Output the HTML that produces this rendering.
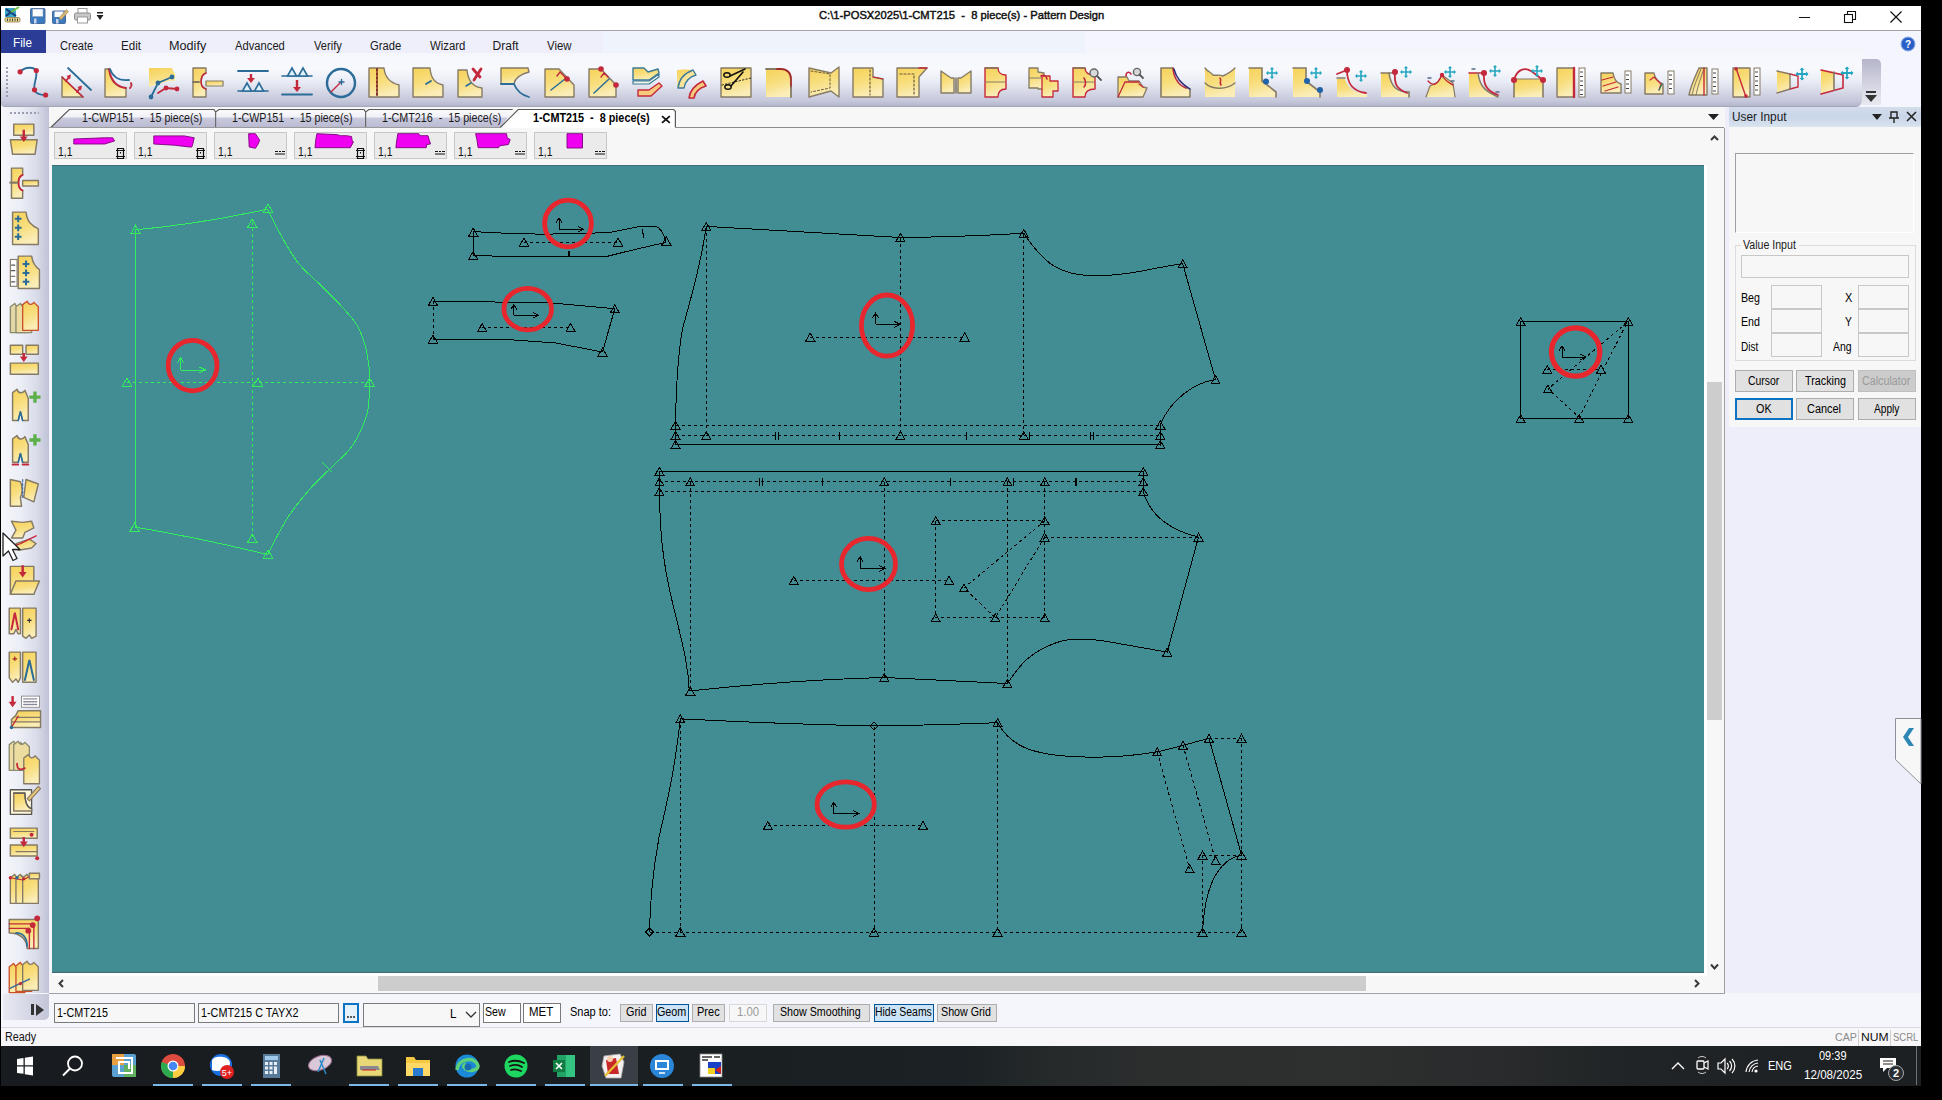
<!DOCTYPE html>
<html><head><meta charset="utf-8">
<style>
*{margin:0;padding:0;box-sizing:border-box}
html,body{width:1942px;height:1100px;overflow:hidden;background:#000;font-family:"Liberation Sans",sans-serif;font-size:12px;color:#000;position:relative}
.a{position:absolute}
.tx{position:absolute;white-space:pre;line-height:1;transform-origin:0 0}
.box{position:absolute;background:#fff;border:1px solid #abadb3}
.btn{position:absolute;background:#e1e1e1;border:1px solid #adadad}
.thumb{position:absolute;background:#ebebeb;border:1px solid #c4c4c4;width:73px;height:28px}
svg{position:absolute;overflow:visible}
</style></head><body>
<!-- window background -->
<div class="a" style="left:1px;top:6px;width:1920px;height:1040px;background:#f5f6fc"></div>
<!-- title bar -->
<div class="a" style="left:1px;top:6px;width:1920px;height:24px;background:#fff"></div>
<div class="a" style="left:1px;top:30px;width:1920px;height:1px;background:#a5a5a8"></div>
<!-- menu bar -->
<div class="a" style="left:1px;top:31px;width:1920px;height:26px;background:#f5f6fd"></div><div class="a" style="left:1px;top:31px;width:602px;height:22px;background:#eeeffa"></div><div class="a" style="left:603px;top:31px;width:482px;height:22px;background:#eff4fc"></div>
<div class="a" style="left:1px;top:30px;width:45px;height:23px;background:#2b3c96"></div>
<!-- toolbar -->
<div class="a" style="left:1px;top:53px;width:1920px;height:54px;background:#f5f6fd"></div>
<div class="a" style="left:1px;top:53px;width:1861px;height:54px;border-radius:0 0 6px 4px;background:linear-gradient(#f6f7fd 0%,#f8f9fd 30%,#eceef7 50%,#d8dae8 70%,#c6c8db 88%,#b7b9cf 97%,#9d9eae 100%)"></div>
<div class="a" style="left:1862px;top:59px;width:19px;height:46px;border-radius:0 5px 0 0;background:linear-gradient(#b5b5cb,#dcdce8 70%,#e8e8f0)"></div>
<!-- tab bar area -->
<div class="a" style="left:49px;top:107px;width:1676px;height:20px;background:#f7f7f7"></div>
<div class="a" style="left:49px;top:127px;width:1676px;height:1px;background:#a0a0a0"></div>
<div class="a" style="left:49px;top:128px;width:1655px;height:37px;background:#f7f7f7"></div>
<!-- canvas -->
<div class="a" style="left:52px;top:165px;width:1652px;height:808px;background:#428c93"></div>
<div class="a" style="left:52px;top:165px;width:1652px;height:1px;background:#3d6f78"></div>
<div class="a" style="left:52px;top:972px;width:1652px;height:1px;background:#3f6a72"></div>
<!-- vertical scrollbar -->
<div class="a" style="left:1704px;top:128px;width:20px;height:865px;background:#f7f7f7"></div>
<div class="a" style="left:1707px;top:382px;width:15px;height:338px;background:#cdcdcd"></div>
<!-- horizontal scrollbar -->
<div class="a" style="left:49px;top:973px;width:1655px;height:20px;background:#f7f7f7"></div>
<div class="a" style="left:52px;top:973px;width:1652px;height:3px;background:#fff"></div>
<div class="a" style="left:1704px;top:165px;width:3px;height:811px;background:#fff"></div>
<div class="a" style="left:378px;top:976px;width:988px;height:15px;background:#cdcdcd"></div>
<div class="a" style="left:49px;top:993px;width:1676px;height:1px;background:#a0a0a8"></div>
<div class="a" style="left:1724px;top:107px;width:1px;height:887px;background:#a0a0a0"></div>
<!-- left vertical toolbar -->
<div class="a" style="left:1px;top:107px;width:48px;height:886px;background:linear-gradient(90deg,#f6f7fb 0%,#eceef6 40%,#d9dbe9 75%,#bfc2d6 100%)"></div>
<div class="a" style="left:3px;top:994px;width:46px;height:26px;border-radius:0 0 5px 0;background:linear-gradient(90deg,#e9eaf3,#d0d2e2 70%,#c3c5d8)"></div>
<!-- right panel -->
<div class="a" style="left:1725px;top:107px;width:196px;height:886px;background:#eeeefb"></div>
<div class="a" style="left:1729px;top:107px;width:192px;height:20px;background:linear-gradient(#d3dcea,#c9d6e8 50%,#dae4f0)"></div>
<div class="a" style="left:1729px;top:127px;width:192px;height:300px;background:#f7f7f7"></div>
<div class="a" style="left:1735px;top:153px;width:179px;height:80px;background:#f7f7f7;border-top:1px solid #a0a0a0;border-left:1px solid #a0a0a0;border-right:1px solid #fff;border-bottom:1px solid #fff"></div>
<div class="a" style="left:1735px;top:245px;width:181px;height:116px;border:1px solid #dcdcdc"></div>
<div class="a" style="left:1741px;top:255px;width:168px;height:23px;background:#f7f7f7;border:1px solid #c8c8c8"></div>
<div class="a" style="left:1741px;top:240px;width:58px;height:12px;background:#f7f7f7"></div>
<div class="a" style="left:1771px;top:285px;width:51px;height:24px;border:1px solid #c8c8c8"></div>
<div class="a" style="left:1771px;top:309px;width:51px;height:24px;border:1px solid #c8c8c8"></div>
<div class="a" style="left:1771px;top:333px;width:51px;height:24px;border:1px solid #c8c8c8"></div>
<div class="a" style="left:1858px;top:285px;width:51px;height:24px;border:1px solid #c8c8c8"></div>
<div class="a" style="left:1858px;top:309px;width:51px;height:24px;border:1px solid #c8c8c8"></div>
<div class="a" style="left:1858px;top:333px;width:51px;height:24px;border:1px solid #c8c8c8"></div>
<div class="btn" style="left:1735px;top:370px;width:58px;height:22px"></div>
<div class="btn" style="left:1796px;top:370px;width:58px;height:22px"></div>
<div class="btn" style="left:1858px;top:370px;width:58px;height:22px;background:#cccccc;border-color:#bfbfbf"></div>
<div class="btn" style="left:1735px;top:398px;width:58px;height:22px;border:2px solid #0c73c2"></div>
<div class="btn" style="left:1796px;top:398px;width:58px;height:22px"></div>
<div class="btn" style="left:1858px;top:398px;width:58px;height:22px"></div>
<!-- bottom bar -->
<div class="a" style="left:1px;top:1027px;width:1920px;height:1px;background:#d8d8e0"></div>
<div class="a" style="left:1px;top:1028px;width:1920px;height:18px;background:#f7f7fa"></div>
<div class="box" style="left:54px;top:1003px;width:141px;height:20px;background:#f7f7f7;border-color:#7a7a7a"></div>
<div class="box" style="left:198px;top:1003px;width:141px;height:20px;background:#f7f7f7;border-color:#7a7a7a"></div>
<div class="a" style="left:343px;top:1003px;width:16px;height:20px;background:#e5f1fb;border:2px solid #0c73c2"></div>
<div class="box" style="left:363px;top:1003px;width:117px;height:24px;background:#f7f7f7;border-color:#7a7a7a"></div>
<div class="box" style="left:483px;top:1003px;width:38px;height:20px;border-color:#7a7a7a"></div>
<div class="box" style="left:523px;top:1003px;width:38px;height:20px;border-color:#7a7a7a"></div>
<div class="btn" style="left:620px;top:1004px;width:33px;height:18px"></div>
<div class="btn" style="left:656px;top:1004px;width:33px;height:18px;background:#cce4f7;border-color:#005499"></div>
<div class="btn" style="left:692px;top:1004px;width:33px;height:18px"></div>
<div class="a" style="left:729px;top:1004px;width:38px;height:18px;background:#f7f7f7;border:1px solid #d8d8d8"></div>
<div class="btn" style="left:773px;top:1004px;width:97px;height:18px"></div>
<div class="btn" style="left:874px;top:1004px;width:60px;height:18px;background:#cce4f7;border-color:#005499"></div>
<div class="btn" style="left:937px;top:1004px;width:60px;height:18px"></div>
<div class="a" style="left:1858px;top:1030px;width:1px;height:16px;background:#d0d0d0"></div>
<div class="a" style="left:1890px;top:1030px;width:1px;height:16px;background:#d0d0d0"></div>
<!-- taskbar -->
<div class="a" style="left:0;top:1046px;width:1921px;height:40px;background:linear-gradient(90deg,#181c20 0%,#1a1f22 38%,#1b2124 50%,#262a2b 55%,#2c2e2e 60%,#2e2f2f 70%,#292b2c 78%,#202426 85%,#1c2023 100%)"></div>
<div class="a" style="left:0;top:1046px;width:1px;height:40px;background:#000"></div>
<div class="a" style="left:1916px;top:1046px;width:1px;height:39px;background:#6b7075"></div>
<div class="a" style="left:54.3px;top:131.5px;width:72.5px;height:27px;background:#ebebeb;border:1px solid #c6c6c6"></div><svg style="left:54.3px;top:131.5px" width="73" height="27" viewBox="0 0 73 27"><path d="M19.8,7 L50.7,5.8 L58.7,5.8 L60.6,8.9 L57.5,9.9 L50.7,12 L19.8,12 Z" fill="#f000f0" stroke="#7a007a" stroke-width="0.9"/><path d="M62,18.5 h9 M62,24.5 h9 M63.5,16.5 h6 v10 h-6 Z M66.5,20 v1.5" fill="none" stroke="#111" stroke-width="1.2"/></svg>
<div class="a" style="left:134.3px;top:131.5px;width:72.5px;height:27px;background:#ebebeb;border:1px solid #c6c6c6"></div><svg style="left:134.3px;top:131.5px" width="73" height="27" viewBox="0 0 73 27"><path d="M19.8,3.9 L50.3,3.9 L60.2,5.8 L59,11.3 L57.8,15 L55.3,15 L40.4,13.2 L19.8,12 Z" fill="#f000f0" stroke="#7a007a" stroke-width="0.9"/><path d="M62,18.5 h9 M62,24.5 h9 M63.5,16.5 h6 v10 h-6 Z M66.5,20 v1.5" fill="none" stroke="#111" stroke-width="1.2"/></svg>
<div class="a" style="left:214.3px;top:131.5px;width:72.5px;height:27px;background:#ebebeb;border:1px solid #c6c6c6"></div><svg style="left:214.3px;top:131.5px" width="73" height="27" viewBox="0 0 73 27"><path d="M34.6,1.7 L41.4,1.7 L45.7,8.2 L43.9,12.5 L41.4,16.3 L35.2,15 Z" fill="#f000f0" stroke="#7a007a" stroke-width="0.9"/><path d="M61,19.5 h3 M65,19.5 h2 M68,19.5 h3 M61,22 h10" fill="none" stroke="#111" stroke-width="1.2"/></svg>
<div class="a" style="left:294.3px;top:131.5px;width:72.5px;height:27px;background:#ebebeb;border:1px solid #c6c6c6"></div><svg style="left:294.3px;top:131.5px" width="73" height="27" viewBox="0 0 73 27"><path d="M22.9,1.7 L43.3,2.7 L46.4,3.7 L52.6,3.7 L57.5,4.5 L58.1,8.2 L59.4,10.1 L56.3,15.7 L21,15.7 L21.7,8.2 Z" fill="#f000f0" stroke="#7a007a" stroke-width="0.9"/><path d="M62,18.5 h9 M62,24.5 h9 M63.5,16.5 h6 v10 h-6 Z M66.5,20 v1.5" fill="none" stroke="#111" stroke-width="1.2"/></svg>
<div class="a" style="left:374.3px;top:131.5px;width:72.5px;height:27px;background:#ebebeb;border:1px solid #c6c6c6"></div><svg style="left:374.3px;top:131.5px" width="73" height="27" viewBox="0 0 73 27"><path d="M23.8,1.7 L44.8,1.7 L46,3.7 L54,3.7 L55.3,8.2 L56.5,12 L52.8,12.5 L52.2,15.7 L21.9,15.7 L22.5,10.1 Z" fill="#f000f0" stroke="#7a007a" stroke-width="0.9"/><path d="M61,19.5 h3 M65,19.5 h2 M68,19.5 h3 M61,22 h10" fill="none" stroke="#111" stroke-width="1.2"/></svg>
<div class="a" style="left:454.3px;top:131.5px;width:72.5px;height:27px;background:#ebebeb;border:1px solid #c6c6c6"></div><svg style="left:454.3px;top:131.5px" width="73" height="27" viewBox="0 0 73 27"><path d="M21.6,1.7 L52.5,1.7 L53.2,5.8 L56.2,7.6 L54.4,12.5 L45.7,13.8 L44.5,15.7 L24.1,15.7 L22.9,7.6 Z" fill="#f000f0" stroke="#7a007a" stroke-width="0.9"/><path d="M61,19.5 h3 M65,19.5 h2 M68,19.5 h3 M61,22 h10" fill="none" stroke="#111" stroke-width="1.2"/></svg>
<div class="a" style="left:534.3px;top:131.5px;width:72.5px;height:27px;background:#ebebeb;border:1px solid #c6c6c6"></div><svg style="left:534.3px;top:131.5px" width="73" height="27" viewBox="0 0 73 27"><path d="M33,1.7 L48.5,1.7 L48.5,16 L33,16 Z" fill="#f000f0" stroke="#7a007a" stroke-width="0.9"/><path d="M61,19.5 h3 M65,19.5 h2 M68,19.5 h3 M61,22 h10" fill="none" stroke="#111" stroke-width="1.2"/></svg>
<div class="a" style="left:49px;top:107px;width:1676px;height:21px;background:#f7f7f7"></div>
<svg style="left:0;top:0" width="1942" height="200" viewBox="0 0 1942 200"><defs><linearGradient id="tabg" x1="0" y1="0" x2="0" y2="1"><stop offset="0" stop-color="#fcfcfe"/><stop offset="0.4" stop-color="#f0f0f7"/><stop offset="0.5" stop-color="#c9c9dd"/><stop offset="1" stop-color="#b9bad2"/></linearGradient></defs><path d="M50.8,127.5 L69.3,109.5 L514,109.5 L500.3,127.5 Z" fill="url(#tabg)"/><path d="M50.8,127.5 L69.3,109.5 L214,109.5 L215.6,112 L219,109.5 L364,109.5 L365.6,112 L369,109.5 L512.7,109.5" fill="none" stroke="#5a5a5a" stroke-width="1.2"/><path d="M215.6,112 L215.6,127.5 M365.6,112 L365.6,127.5" fill="none" stroke="#6a6a6a" stroke-width="1.2"/><path d="M500.3,127.8 L518.2,109.5 L673.7,109.5 L675.4,111.3 L675.4,127.8 Z" fill="#fff"/><path d="M500.3,127.5 L518.2,109.5 L673.7,109.5 L675.4,111.3 L675.4,127.5" fill="none" stroke="#5a5a5a" stroke-width="1.2"/><path d="M675.4,127.5 L1724,127.5" fill="none" stroke="#8c8c8c" stroke-width="1"/><path d="M49,127.5 L500.3,127.5" fill="none" stroke="#9a9a9a" stroke-width="1"/><path d="M662,116.1 L669.8,122.9 M669.8,116.1 L662,122.9" stroke="#111" stroke-width="1.8"/><path d="M1708,114 L1719,114 L1713.5,120 Z" fill="#222"/><path d="M1711,140 L1714.5,136.5 L1718,140" fill="none" stroke="#3a3a3a" stroke-width="2"/><path d="M1711,964.5 L1714.5,968.5 L1718,964.5" fill="none" stroke="#3a3a3a" stroke-width="2"/><path d="M63,980 L59.5,983.5 L63,987" fill="none" stroke="#3a3a3a" stroke-width="2"/><path d="M1695,980 L1698.5,983.5 L1695,987" fill="none" stroke="#3a3a3a" stroke-width="2"/></svg>
<svg width="0" height="0" style="left:0;top:0"><defs><linearGradient id="yg" x1="0" y1="0" x2="0.3" y2="1"><stop offset="0" stop-color="#f6d25a"/><stop offset="0.55" stop-color="#f8de7e"/><stop offset="1" stop-color="#faedb8"/></linearGradient></defs></svg>
<svg style="left:17px;top:67px" width="32" height="32" viewBox="0 0 32 32"><path d="M3,5 C8,-1 18,0 19,4 C21,10 16,16 17.5,23 C19,27 24,28 28.6,28" fill="none" stroke="#2b6c98" stroke-width="1.8" stroke-linecap="round"/><circle cx="3.1" cy="4.8" r="2.6" fill="#c4283c"/><circle cx="19.3" cy="3.6" r="2.6" fill="#c4283c"/><circle cx="17.5" cy="22.8" r="2.6" fill="#c4283c"/><circle cx="28.6" cy="28" r="2.6" fill="#c4283c"/></svg>
<svg style="left:61px;top:67px" width="32" height="32" viewBox="0 0 32 32"><path d="M1,10 L22,30 L1,30 Z" fill="url(#yg)" stroke="#857a66" stroke-width="1.4" stroke-linejoin="round"/><path d="M1,10 L22,30" fill="none" stroke="#c4283c" stroke-width="1.6" stroke-linecap="round"/><path d="M7,1 L30,23" fill="none" stroke="#2b6c98" stroke-width="1.8" stroke-linecap="round"/><path d="M5,14 L8,10" fill="none" stroke="#c4283c" stroke-width="1.8" stroke-linecap="round"/><path d="M10,7.5 L5.5,9 L9,12.5 Z" fill="#c4283c"/><path d="M16,25 L19,21" fill="none" stroke="#c4283c" stroke-width="1.8" stroke-linecap="round"/><path d="M21,18.5 L16.5,20 L20,23.5 Z" fill="#c4283c"/></svg>
<svg style="left:105px;top:67px" width="32" height="32" viewBox="0 0 32 32"><path d="M0,2 L4,2 C5,15 12,20 21,21 L21,30 L0,30 Z" fill="url(#yg)" stroke="#857a66" stroke-width="1.4" stroke-linejoin="round"/><path d="M4,2 C6,15 12,20 21,21" fill="none" stroke="#c4283c" stroke-width="1.8" stroke-linecap="round"/><path d="M5,2 C8,11 14,14 24,13" fill="none" stroke="#2b6c98" stroke-width="1.8" stroke-linecap="round"/><path d="M25,21 C27,19 27,18 26,16" fill="none" stroke="#c4283c" stroke-width="1.8" stroke-linecap="round"/></svg>
<svg style="left:149px;top:67px" width="32" height="32" viewBox="0 0 32 32"><path d="M0,1 L23,1 L26,8 L26,14 L20,14 L0,20 Z" fill="url(#yg)" stroke="none" stroke-width="1.4" stroke-linejoin="round"/><path d="M2,30 L9,16 L23,10" fill="none" stroke="#2b6c98" stroke-width="1.8" stroke-linecap="round"/><path d="M9,26 L17,21 L28,22" fill="none" stroke="#c4283c" stroke-width="1.8" stroke-linecap="round"/><circle cx="2" cy="30" r="2.4" fill="#2b6c98"/><circle cx="9" cy="16" r="2.4" fill="#2b6c98"/><circle cx="23" cy="10" r="2.4" fill="#2b6c98"/><circle cx="17" cy="21" r="2.4" fill="#c4283c"/><circle cx="28" cy="22" r="2.4" fill="#c4283c"/></svg>
<svg style="left:193px;top:67px" width="32" height="32" viewBox="0 0 32 32"><path d="M0,1 L13,1 L13,6 C7,8 6,20 13,22 L13,30 L0,30 Z" fill="url(#yg)" stroke="#857a66" stroke-width="1.4" stroke-linejoin="round"/><path d="M13,6 C7,8 6,20 13,22" fill="none" stroke="#c4283c" stroke-width="1.5" stroke-linecap="round"/><path d="M13,14 L30,14 L30,19 L13,19 Z" fill="url(#yg)" stroke="#857a66" stroke-width="1.2" stroke-linejoin="round"/><path d="M0,15 L6,15" fill="none" stroke="#857a66" stroke-width="2" stroke-linecap="round"/></svg>
<svg style="left:237px;top:67px" width="32" height="32" viewBox="0 0 32 32"><path d="M1,4 L31,4" fill="none" stroke="#2b6c98" stroke-width="1.8" stroke-linecap="round"/><path d="M14,7 L14,13" stroke="#c4283c" stroke-width="2.4"/><path d="M10,11 L18,11 L14,16 Z" fill="#c4283c"/><path d="M1,24 L31,24" fill="none" stroke="#2b6c98" stroke-width="1.6" stroke-linecap="round"/><path d="M10,16 L14.5,24 L5.5,24 Z" fill="#dff3f8" stroke="#2b6c98" stroke-width="1.6"/><path d="M22,16 L26.5,24 L17.5,24 Z" fill="#dff3f8" stroke="#2b6c98" stroke-width="1.6"/></svg>
<svg style="left:281px;top:67px" width="32" height="32" viewBox="0 0 32 32"><path d="M1,9 L31,9" fill="none" stroke="#2b6c98" stroke-width="1.6" stroke-linecap="round"/><path d="M11,1 L15.5,9 L6.5,9 Z" fill="#dff3f8" stroke="#2b6c98" stroke-width="1.6"/><path d="M22,1 L26.5,9 L17.5,9 Z" fill="#dff3f8" stroke="#2b6c98" stroke-width="1.6"/><path d="M16,13 L16,22" stroke="#c4283c" stroke-width="2.4"/><path d="M12,20 L20,20 L16,25 Z" fill="#c4283c"/><path d="M1,27.5 L31,27.5" fill="none" stroke="#2b6c98" stroke-width="1.8" stroke-linecap="round"/></svg>
<svg style="left:325px;top:67px" width="32" height="32" viewBox="0 0 32 32"><circle cx="16" cy="16" r="14" fill="none" stroke="#2b6c98" stroke-width="2.4"/><path d="M6,25 L16,15" fill="none" stroke="#c4283c" stroke-width="1.4" stroke-linecap="round"/><path d="M14,15 h5 M16.5,12.5 v5" fill="none" stroke="#2b6c98" stroke-width="1.4" stroke-linecap="round"/></svg>
<svg style="left:369px;top:67px" width="32" height="32" viewBox="0 0 32 32"><path d="M0,1 L15,1 C16,12 22,16 30,18 L30,30 L0,30 Z" fill="url(#yg)" stroke="#857a66" stroke-width="1.4" stroke-linejoin="round"/><path d="M8,2 L8,30" fill="none" stroke="#7a2020" stroke-width="1.8" stroke-linecap="round" stroke-dasharray="2 2"/></svg>
<svg style="left:413px;top:67px" width="32" height="32" viewBox="0 0 32 32"><path d="M0,1 L17,1 C18,12 22,16 30,18 L30,30 L0,30 Z" fill="url(#yg)" stroke="#857a66" stroke-width="1.4" stroke-linejoin="round"/><path d="M13,17 L18,14" fill="none" stroke="#2b6c98" stroke-width="1.8" stroke-linecap="round"/></svg>
<svg style="left:457px;top:67px" width="32" height="32" viewBox="0 0 32 32"><path d="M1,3 L10,3 C11,13 16,20 25,21 L25,30 L1,30 Z" fill="url(#yg)" stroke="#857a66" stroke-width="1.4" stroke-linejoin="round"/><path d="M9,19 L14,16" fill="none" stroke="#2b6c98" stroke-width="1.5" stroke-linecap="round"/><path d="M17,13 L24,2 M16,2 L23,10" fill="none" stroke="#c4283c" stroke-width="2.8" stroke-linecap="round"/></svg>
<svg style="left:501px;top:67px" width="32" height="32" viewBox="0 0 32 32"><path d="M0,1 L27,1 L28,5 C20,7 14,10 13,17 L0,17 Z" fill="url(#yg)" stroke="#857a66" stroke-width="1.4" stroke-linejoin="round"/><path d="M0,17 L13,17 C15,22 20,28 28,30" fill="none" stroke="#2b6c98" stroke-width="1.8" stroke-linecap="round"/></svg>
<svg style="left:545px;top:67px" width="32" height="32" viewBox="0 0 32 32"><path d="M0,2 L14,2 L29,18 L29,30 L0,30 Z" fill="url(#yg)" stroke="#857a66" stroke-width="1.4" stroke-linejoin="round"/><path d="M6,23 L20,12" fill="none" stroke="#2b6c98" stroke-width="1.5" stroke-linecap="round"/><path d="M12,9 L15,5 L20,10" fill="none" stroke="#c4283c" stroke-width="1.4" stroke-linecap="round"/><circle cx="22" cy="12" r="2.8" fill="#c4283c"/></svg>
<svg style="left:589px;top:67px" width="32" height="32" viewBox="0 0 32 32"><path d="M0,2 L12,2 L27,18 L27,30 L0,30 Z" fill="url(#yg)" stroke="#857a66" stroke-width="1.4" stroke-linejoin="round"/><path d="M5,26 L20,12" fill="none" stroke="#2b6c98" stroke-width="1.5" stroke-linecap="round"/><path d="M12,10 L15,6 L19,10" fill="none" stroke="#c4283c" stroke-width="1.4" stroke-linecap="round"/><circle cx="12" cy="2" r="2.8" fill="#c4283c"/><circle cx="27" cy="18" r="2.8" fill="#c4283c"/></svg>
<svg style="left:633px;top:67px" width="32" height="32" viewBox="0 0 32 32"><path d="M0,1 L11,1 L15,5 L25,2 L26,6 L16,13 L0,13 Z" fill="url(#yg)" stroke="#3b7b98" stroke-width="1.4" stroke-linejoin="round"/><path d="M0,14 L16,14 L26,7 L26,10 L16,17 L0,17 Z" fill="#f3f3e8" stroke="#3b7b98" stroke-width="1.2" stroke-linejoin="round"/><path d="M5,23 L16,23 L26,16 L29,19 L18,29 L5,29 Z" fill="#f7c97a" stroke="#c4283c" stroke-width="1.4" stroke-linejoin="round"/></svg>
<svg style="left:677px;top:67px" width="32" height="32" viewBox="0 0 32 32"><path d="M0,3 L0,21 L5,21 C6,14 10,10 17,9 L14,3 C8,2 3,3 0,3 Z" fill="url(#yg)" stroke="none" stroke-width="1.4" stroke-linejoin="round"/><path d="M1,21 C2,12 8,6 16,3 L19,8 C12,10 8,15 7,21 Z" fill="#f7e39a" stroke="#3b7b98" stroke-width="1.4" stroke-linejoin="round"/><path d="M12,31 C13,23 18,18 26,14 L29,19 C22,21 18,25 17,31 Z" fill="#f7c97a" stroke="#c4283c" stroke-width="1.6" stroke-linejoin="round"/></svg>
<svg style="left:721px;top:67px" width="32" height="32" viewBox="0 0 32 32"><path d="M0,1 L30,1 L30,30 L0,30 Z" fill="url(#yg)" stroke="#857a66" stroke-width="1.4" stroke-linejoin="round"/><path d="M1,18 L30,11" fill="none" stroke="#333" stroke-width="1" stroke-linecap="round" stroke-dasharray="1.5 2"/><ellipse cx="6" cy="8" rx="3.2" ry="2.2" fill="none" stroke="#111" stroke-width="1.4"/><ellipse cx="7" cy="20" rx="3.2" ry="2.2" fill="none" stroke="#111" stroke-width="1.4"/><path d="M9,9 L24,2 M10,19 L22,5" fill="none" stroke="#111" stroke-width="1.6" stroke-linecap="round"/></svg>
<svg style="left:765px;top:67px" width="32" height="32" viewBox="0 0 32 32"><path d="M1,2 L16,2 C22,2 26,6 26,12 L26,30 L1,30 Z" fill="url(#yg)" stroke="none" stroke-width="1.4" stroke-linejoin="round"/><path d="M1,2 L12,2" fill="none" stroke="#857a66" stroke-width="1.8" stroke-linecap="round"/><path d="M12,2 L16,2 C22,2 26,6 26,12 L26,20" fill="none" stroke="#a02a2a" stroke-width="1.8" stroke-linecap="round"/><path d="M26,20 L26,30" fill="none" stroke="#857a66" stroke-width="1.8" stroke-linecap="round"/></svg>
<svg style="left:809px;top:67px" width="32" height="32" viewBox="0 0 32 32"><path d="M0,1 L22,6 L30,0 L30,30 L22,24 L0,30 Z" fill="url(#yg)" stroke="#857a66" stroke-width="1.4" stroke-linejoin="round"/><path d="M2,4 L21,7 L21,21 L2,25" fill="none" stroke="#6b5a3a" stroke-width="1" stroke-linecap="round" stroke-dasharray="2 2"/></svg>
<svg style="left:853px;top:67px" width="32" height="32" viewBox="0 0 32 32"><path d="M0,1 L20,1 L20,10 L30,12 L30,30 L0,30 Z" fill="url(#yg)" stroke="#857a66" stroke-width="1.4" stroke-linejoin="round"/><path d="M17,3 L17,28" fill="none" stroke="#6b5a3a" stroke-width="1.2" stroke-linecap="round" stroke-dasharray="2 2"/><path d="M20,10 L30,12" fill="none" stroke="#c4283c" stroke-width="1.2" stroke-linecap="round"/></svg>
<svg style="left:897px;top:67px" width="32" height="32" viewBox="0 0 32 32"><path d="M0,1 L30,1 L22,10 L22,30 L0,30 Z" fill="url(#yg)" stroke="#857a66" stroke-width="1.4" stroke-linejoin="round"/><path d="M22,1 L30,1" fill="none" stroke="#c4283c" stroke-width="1.4" stroke-linecap="round"/><path d="M3,7 L17,7 L17,28" fill="none" stroke="#6b5a3a" stroke-width="1.2" stroke-linecap="round" stroke-dasharray="2 2"/></svg>
<svg style="left:941px;top:67px" width="32" height="32" viewBox="0 0 32 32"><path d="M0,4 L10,11 L13,11 L13,26 L0,26 Z" fill="url(#yg)" stroke="#857a66" stroke-width="1.4" stroke-linejoin="round"/><path d="M17,11 L20,11 L30,4 L30,26 L17,26 Z" fill="url(#yg)" stroke="#857a66" stroke-width="1.4" stroke-linejoin="round"/><path d="M15,11 L15,26" fill="none" stroke="#857a66" stroke-width="1.6" stroke-linecap="round"/></svg>
<svg style="left:985px;top:67px" width="32" height="32" viewBox="0 0 32 32"><path d="M0,1 L13,1 C13,5 16,8 21,8 L21,22 C17,22 13,24 13,30 L0,30 Z" fill="url(#yg)" stroke="#c4283c" stroke-width="1.4" stroke-linejoin="round"/><path d="M1,15 L20,15" fill="none" stroke="#857a66" stroke-width="1.2" stroke-linecap="round" stroke-dasharray="2 1"/><path d="M0,1 L13,1" fill="none" stroke="#857a66" stroke-width="1.4" stroke-linecap="round"/></svg>
<svg style="left:1029px;top:67px" width="32" height="32" viewBox="0 0 32 32"><path d="M0,1 L9,1 L9,5 L15,6 L15,22 L9,22 L9,21 L0,21 Z" fill="url(#yg)" stroke="#857a66" stroke-width="1.3" stroke-linejoin="round"/><path d="M13,9 L21,9 L21,14 L29,14 L29,24 L24,24 L24,30 L13,30 Z" fill="url(#yg)" stroke="#c4283c" stroke-width="1.3" stroke-linejoin="round"/><path d="M0,11 L12,11" fill="none" stroke="#857a66" stroke-width="1" stroke-linecap="round"/><path d="M12,9 C15,7 17,9 18,12" fill="none" stroke="#c4283c" stroke-width="1.6" stroke-linecap="round"/></svg>
<svg style="left:1073px;top:67px" width="32" height="32" viewBox="0 0 32 32"><path d="M0,1 L12,1 C12,5 15,8 22,8 L22,22 C17,22 12,24 12,30 L0,30 Z" fill="url(#yg)" stroke="#c4283c" stroke-width="1.4" stroke-linejoin="round"/><path d="M0,1 L12,1" fill="none" stroke="#857a66" stroke-width="1.4" stroke-linecap="round"/><path d="M1,15 L22,15" fill="none" stroke="#857a66" stroke-width="1.2" stroke-linecap="round" stroke-dasharray="2 1"/><path d="M11,11 C13,14 13,18 11,20" fill="none" stroke="#c4283c" stroke-width="1.6" stroke-linecap="round"/><circle cx="21" cy="6" r="4" fill="#d8d8d8" stroke="#666" stroke-width="1.4"/><path d="M24,9 L28,13" fill="none" stroke="#555" stroke-width="1.8" stroke-linecap="round"/></svg>
<svg style="left:1117px;top:67px" width="32" height="32" viewBox="0 0 32 32"><path d="M1,30 L1,10 L10,10 L12,14 L22,14 L26,20 L30,21 L26,30 Z" fill="url(#yg)" stroke="#857a66" stroke-width="1.3" stroke-linejoin="round"/><path d="M1,30 L8,15 L22,15 M22,17 L26,20" fill="none" stroke="#c4283c" stroke-width="1.3" stroke-linecap="round"/><path d="M9,9 C9,5 12,4 14,7" fill="none" stroke="#c4283c" stroke-width="1.6" stroke-linecap="round"/><circle cx="20" cy="5" r="3.6" fill="#d8d8d8" stroke="#666" stroke-width="1.4"/><path d="M22.5,7.5 L26,11" fill="none" stroke="#555" stroke-width="1.8" stroke-linecap="round"/></svg>
<svg style="left:1161px;top:67px" width="32" height="32" viewBox="0 0 32 32"><path d="M0,1 L12,1 C13,12 20,20 29,22 L29,30 L0,30 Z" fill="url(#yg)" stroke="#857a66" stroke-width="1.6" stroke-linejoin="round"/><path d="M12,1 C13,12 20,20 29,22 L23,18 C18,16 14,10 12,1 Z" fill="#e8d8ec" stroke="none" stroke-width="1.4" stroke-linejoin="round"/><path d="M12,1 C13,12 17,18 25,21" fill="none" stroke="#c4283c" stroke-width="1.4" stroke-linecap="round"/><path d="M13,2 C15,10 20,17 29,22" fill="none" stroke="#2a2a7a" stroke-width="1.4" stroke-linecap="round"/></svg>
<svg style="left:1205px;top:67px" width="32" height="32" viewBox="0 0 32 32"><path d="M0,1 C3,5 6,5 8,8 C12,9 14,7 18,9 C22,7 26,5 30,1 L30,30 L0,30 Z" fill="url(#yg)" stroke="none" stroke-width="1.4" stroke-linejoin="round"/><path d="M0,1 C3,5 6,5 8,8 C12,9 14,7 18,9 C22,7 26,5 30,1" fill="none" stroke="#857a66" stroke-width="1.4" stroke-linecap="round"/><path d="M0,16 C6,22 20,24 30,16" fill="none" stroke="#857a66" stroke-width="1.4" stroke-linecap="round"/><path d="M15,11 C17,13 14,15 16,18" fill="none" stroke="#c4283c" stroke-width="1.6" stroke-linecap="round"/></svg>
<svg style="left:1249px;top:67px" width="32" height="32" viewBox="0 0 32 32"><path d="M0,1 L13,1 L13,14 L27,25 L27,30 L0,30 Z" fill="url(#yg)" stroke="none" stroke-width="1.4" stroke-linejoin="round"/><path d="M0,1 L13,1 L13,14 L27,25 L27,30" fill="none" stroke="#857a66" stroke-width="1.6" stroke-linecap="round"/><circle cx="17" cy="14.5" r="3" fill="#1f63a8"/><path d="M18.0,6 L28.0,6 M23,1.0 L23,11.0" stroke="#22a6bf" stroke-width="1.6"/><path d="M17.0,6 l2.2,-2.2 v4.4 Z M29.0,6 l-2.2,-2.2 v4.4 Z M23,0.0 l-2.2,2.2 h4.4 Z M23,12.0 l-2.2,-2.2 h4.4 Z" fill="#22a6bf"/></svg>
<svg style="left:1293px;top:67px" width="32" height="32" viewBox="0 0 32 32"><path d="M0,1 L13,1 L13,14 L27,25 L27,30 L0,30 Z" fill="url(#yg)" stroke="none" stroke-width="1.4" stroke-linejoin="round"/><path d="M0,1 L13,1 L13,14 L27,25 L27,30" fill="none" stroke="#857a66" stroke-width="1.6" stroke-linecap="round"/><circle cx="14" cy="14" r="3" fill="#1f63a8"/><circle cx="27" cy="23" r="3" fill="#1f63a8"/><path d="M18.0,6 L28.0,6 M23,1.0 L23,11.0" stroke="#22a6bf" stroke-width="1.6"/><path d="M17.0,6 l2.2,-2.2 v4.4 Z M29.0,6 l-2.2,-2.2 v4.4 Z M23,0.0 l-2.2,2.2 h4.4 Z M23,12.0 l-2.2,-2.2 h4.4 Z" fill="#22a6bf"/></svg>
<svg style="left:1337px;top:67px" width="32" height="32" viewBox="0 0 32 32"><path d="M0,12 L8,12 C11,22 18,26 30,27 L30,30 L0,30 Z" fill="url(#yg)" stroke="none" stroke-width="1.4" stroke-linejoin="round"/><path d="M0,11 L8,11" fill="none" stroke="#857a66" stroke-width="1.6" stroke-linecap="round"/><path d="M0,7 L10,3 C10,15 14,24 29,26" fill="none" stroke="#c4283c" stroke-width="1.8" stroke-linecap="round"/><circle cx="10" cy="3" r="3" fill="#c4283c"/><path d="M19.0,9 L29.0,9 M24,4.0 L24,14.0" stroke="#22a6bf" stroke-width="1.6"/><path d="M18.0,9 l2.2,-2.2 v4.4 Z M30.0,9 l-2.2,-2.2 v4.4 Z M24,3.0 l-2.2,2.2 h4.4 Z M24,15.0 l-2.2,-2.2 h4.4 Z" fill="#22a6bf"/></svg>
<svg style="left:1381px;top:67px" width="32" height="32" viewBox="0 0 32 32"><path d="M0,6 L8,6 C11,22 18,26 28,27 L28,30 L0,30 Z" fill="url(#yg)" stroke="none" stroke-width="1.4" stroke-linejoin="round"/><path d="M0,6 L14,6" fill="none" stroke="#857a66" stroke-width="1.6" stroke-linecap="round"/><path d="M8,6 C10,20 16,25 28,25 L28,30" fill="none" stroke="#857a66" stroke-width="1.6" stroke-linecap="round"/><path d="M14,5 C13,18 16,22 26,26" fill="none" stroke="#c4283c" stroke-width="1.8" stroke-linecap="round"/><circle cx="14" cy="5" r="3" fill="#c4283c"/><path d="M20.0,5 L30.0,5 M25,0.0 L25,10.0" stroke="#22a6bf" stroke-width="1.6"/><path d="M19.0,5 l2.2,-2.2 v4.4 Z M31.0,5 l-2.2,-2.2 v4.4 Z M25,-1.0 l-2.2,2.2 h4.4 Z M25,11.0 l-2.2,-2.2 h4.4 Z" fill="#22a6bf"/></svg>
<svg style="left:1425px;top:67px" width="32" height="32" viewBox="0 0 32 32"><path d="M1,30 L5,19 L13,15 L17,8 L28,16 L30,30 Z" fill="url(#yg)" stroke="none" stroke-width="1.4" stroke-linejoin="round"/><path d="M1,30 L5,19 L13,15 L17,8 L28,16 L30,30" fill="none" stroke="#857a66" stroke-width="1.2" stroke-linecap="round"/><path d="M3,14 C8,20 12,18 17,8 C20,14 24,16 28,18" fill="none" stroke="#c4283c" stroke-width="1.4" stroke-linecap="round"/><circle cx="17" cy="8" r="2.2" fill="#c4283c"/><path d="M20.0,5 L30.0,5 M25,0.0 L25,10.0" stroke="#22a6bf" stroke-width="1.6"/><path d="M19.0,5 l2.2,-2.2 v4.4 Z M31.0,5 l-2.2,-2.2 v4.4 Z M25,-1.0 l-2.2,2.2 h4.4 Z M25,11.0 l-2.2,-2.2 h4.4 Z" fill="#22a6bf"/><path d="M3,11 h3 M26,14 h3" fill="none" stroke="#556b88" stroke-width="1.4" stroke-linecap="round"/></svg>
<svg style="left:1469px;top:67px" width="32" height="32" viewBox="0 0 32 32"><path d="M0,6 L8,6 C11,22 18,26 30,30 L0,30 Z" fill="url(#yg)" stroke="none" stroke-width="1.4" stroke-linejoin="round"/><path d="M0,6 L15,6" fill="none" stroke="#c4283c" stroke-width="1.6" stroke-linecap="round"/><path d="M9,6 C11,20 16,24 29,30" fill="none" stroke="#857a66" stroke-width="1.6" stroke-linecap="round"/><path d="M15,6 C14,18 18,24 29,28" fill="none" stroke="#c4283c" stroke-width="1.8" stroke-linecap="round"/><circle cx="15" cy="6" r="3" fill="#c4283c"/><path d="M21.0,4 L31.0,4 M26,-1.0 L26,9.0" stroke="#22a6bf" stroke-width="1.6"/><path d="M20.0,4 l2.2,-2.2 v4.4 Z M32.0,4 l-2.2,-2.2 v4.4 Z M26,-2.0 l-2.2,2.2 h4.4 Z M26,10.0 l-2.2,-2.2 h4.4 Z" fill="#22a6bf"/><path d="M3,2 h3 M27,25 h3" fill="none" stroke="#556b88" stroke-width="1.4" stroke-linecap="round"/></svg>
<svg style="left:1513px;top:67px" width="32" height="32" viewBox="0 0 32 32"><path d="M1,12 L30,12 L30,30 L1,30 Z" fill="url(#yg)" stroke="none" stroke-width="1.4" stroke-linejoin="round"/><path d="M1,12 L1,30 M30,12 L30,30" fill="none" stroke="#857a66" stroke-width="1.6" stroke-linecap="round"/><path d="M1,12 L30,12" fill="none" stroke="#857a66" stroke-width="1.2" stroke-linecap="round"/><path d="M1,13 C4,2 12,0 18,4 C24,8 28,12 30,13" fill="none" stroke="#c4283c" stroke-width="1.8" stroke-linecap="round"/><circle cx="1" cy="13" r="3" fill="#c4283c"/><circle cx="30" cy="13" r="3" fill="#c4283c"/><path d="M19.0,4 L29.0,4 M24,-1.0 L24,9.0" stroke="#22a6bf" stroke-width="1.6"/><path d="M18.0,4 l2.2,-2.2 v4.4 Z M30.0,4 l-2.2,-2.2 v4.4 Z M24,-2.0 l-2.2,2.2 h4.4 Z M24,10.0 l-2.2,-2.2 h4.4 Z" fill="#22a6bf"/></svg>
<svg style="left:1557px;top:67px" width="32" height="32" viewBox="0 0 32 32"><path d="M0,1 L17,1 L17,30 L0,30 Z" fill="url(#yg)" stroke="#857a66" stroke-width="1.4" stroke-linejoin="round"/><path d="M17,1 L17,30" fill="none" stroke="#c4283c" stroke-width="2.4" stroke-linecap="round"/><rect x="22" y="1" width="6" height="29" fill="#fff" stroke="#857a66" stroke-width="1"/><path d="M23,5 h3" stroke="#444" stroke-width="1"/><path d="M23,9.5 h3" stroke="#444" stroke-width="1"/><path d="M23,14.0 h3" stroke="#444" stroke-width="1"/><path d="M23,18.5 h3" stroke="#444" stroke-width="1"/><path d="M23,23.0 h3" stroke="#444" stroke-width="1"/><path d="M23,27.5 h3" stroke="#444" stroke-width="1"/></svg>
<svg style="left:1601px;top:67px" width="32" height="32" viewBox="0 0 32 32"><path d="M0,6 L12,6 C13,12 16,16 20,17 L20,26 L0,26 Z" fill="url(#yg)" stroke="#857a66" stroke-width="1.4" stroke-linejoin="round"/><path d="M1,13 L12,10 M2,19 L15,15 M4,24 L17,20" fill="none" stroke="#c4283c" stroke-width="1.2" stroke-linecap="round"/><rect x="24" y="4" width="6" height="22" fill="#fff" stroke="#857a66" stroke-width="1"/><path d="M25,8 h3" stroke="#444" stroke-width="1"/><path d="M25,12.5 h3" stroke="#444" stroke-width="1"/><path d="M25,17.0 h3" stroke="#444" stroke-width="1"/><path d="M25,21.5 h3" stroke="#444" stroke-width="1"/></svg>
<svg style="left:1645px;top:67px" width="32" height="32" viewBox="0 0 32 32"><path d="M0,6 L9,6 C10,12 13,15 18,17 L18,27 L0,27 Z" fill="url(#yg)" stroke="#857a66" stroke-width="1.4" stroke-linejoin="round"/><path d="M5,13 L9,10 L16,17 L14,23" fill="none" stroke="#c4283c" stroke-width="1.2" stroke-linecap="round"/><path d="M14,23 L17,17" fill="none" stroke="#2a7a6a" stroke-width="1.2" stroke-linecap="round"/><rect x="23" y="4" width="6" height="23" fill="#fff" stroke="#857a66" stroke-width="1"/><path d="M24,8 h3" stroke="#444" stroke-width="1"/><path d="M24,12.5 h3" stroke="#444" stroke-width="1"/><path d="M24,17.0 h3" stroke="#444" stroke-width="1"/><path d="M24,21.5 h3" stroke="#444" stroke-width="1"/></svg>
<svg style="left:1689px;top:67px" width="32" height="32" viewBox="0 0 32 32"><path d="M0,28 C2,18 6,10 10,1 L18,1 L18,28 Z" fill="url(#yg)" stroke="#857a66" stroke-width="1.4" stroke-linejoin="round"/><path d="M3,28 C5,18 9,10 12,2 M7,28 C9,18 12,10 15,2" fill="none" stroke="#857a66" stroke-width="1" stroke-linecap="round"/><path d="M15,1 L15,28" fill="none" stroke="#c4283c" stroke-width="1.4" stroke-linecap="round"/><rect x="23" y="2" width="6" height="25" fill="#fff" stroke="#857a66" stroke-width="1"/><path d="M24,6 h3" stroke="#444" stroke-width="1"/><path d="M24,10.5 h3" stroke="#444" stroke-width="1"/><path d="M24,15.0 h3" stroke="#444" stroke-width="1"/><path d="M24,19.5 h3" stroke="#444" stroke-width="1"/><path d="M24,24.0 h3" stroke="#444" stroke-width="1"/></svg>
<svg style="left:1733px;top:67px" width="32" height="32" viewBox="0 0 32 32"><path d="M0,1 L17,1 L17,30 L0,30 Z" fill="url(#yg)" stroke="#857a66" stroke-width="1.4" stroke-linejoin="round"/><path d="M3,1 L13,30" fill="none" stroke="#c4283c" stroke-width="1.4" stroke-linecap="round"/><circle cx="3" cy="2" r="1.8" fill="#c4283c"/><circle cx="13" cy="29" r="1.8" fill="#c4283c"/><rect x="21" y="1" width="6" height="27" fill="#fff" stroke="#857a66" stroke-width="1"/><path d="M22,5 h3" stroke="#444" stroke-width="1"/><path d="M22,9.5 h3" stroke="#444" stroke-width="1"/><path d="M22,14.0 h3" stroke="#444" stroke-width="1"/><path d="M22,18.5 h3" stroke="#444" stroke-width="1"/><path d="M22,23.0 h3" stroke="#444" stroke-width="1"/></svg>
<svg style="left:1777px;top:67px" width="32" height="32" viewBox="0 0 32 32"><path d="M0,4 L13,7 L13,22 L0,26 Z" fill="url(#yg)" stroke="none" stroke-width="1.4" stroke-linejoin="round"/><path d="M0,4 L13,7 M0,26 L13,22" fill="none" stroke="#857a66" stroke-width="1.4" stroke-linecap="round"/><path d="M13,7 L21,9 L21,20 L13,22" fill="none" stroke="#c4283c" stroke-width="1.4" stroke-linecap="round"/><path d="M13,7 L13,22" fill="none" stroke="#857a66" stroke-width="1.4" stroke-linecap="round"/><path d="M19.5,7 L30.5,7 M25,1.5 L25,12.5" stroke="#22a6bf" stroke-width="1.7600000000000002"/><path d="M18.5,7 l2.4200000000000004,-2.4200000000000004 v4.840000000000001 Z M31.5,7 l-2.4200000000000004,-2.4200000000000004 v4.840000000000001 Z M25,0.5 l-2.4200000000000004,2.4200000000000004 h4.840000000000001 Z M25,13.5 l-2.4200000000000004,-2.4200000000000004 h4.840000000000001 Z" fill="#22a6bf"/></svg>
<svg style="left:1821px;top:67px" width="32" height="32" viewBox="0 0 32 32"><path d="M0,3 L13,5 L13,23 L0,27 Z" fill="url(#yg)" stroke="none" stroke-width="1.4" stroke-linejoin="round"/><path d="M0,3 L22,8 L22,21 L0,27" fill="none" stroke="#c4283c" stroke-width="1.6" stroke-linecap="round"/><path d="M13,5 L13,23" fill="none" stroke="#857a66" stroke-width="1.6" stroke-linecap="round"/><path d="M20.5,6 L31.5,6 M26,0.5 L26,11.5" stroke="#22a6bf" stroke-width="1.7600000000000002"/><path d="M19.5,6 l2.4200000000000004,-2.4200000000000004 v4.840000000000001 Z M32.5,6 l-2.4200000000000004,-2.4200000000000004 v4.840000000000001 Z M26,-0.5 l-2.4200000000000004,2.4200000000000004 h4.840000000000001 Z M26,12.5 l-2.4200000000000004,-2.4200000000000004 h4.840000000000001 Z" fill="#22a6bf"/></svg>
<div class="a" style="left:6px;top:67px;width:2px;height:30px;background:repeating-linear-gradient(#9a9cb0 0 2px,transparent 2px 4px)"></div>
<svg style="left:1864px;top:90px" width="14" height="14" viewBox="0 0 14 14"><path d="M2,1 H12 V3 H2 Z" fill="#333"/><path d="M1,5 H13 L7,12 Z" fill="#333"/></svg>
<svg style="left:7.1px;top:122.5px" width="35.8" height="35.8" viewBox="0 0 32 32"><path d="M6,1 L24,1 L24,11 L6,11 Z" fill="url(#yg)" stroke="#857a66" stroke-width="1.3" stroke-linejoin="round"/><path d="M3,15 L27,15 L25,28 L5,28 Z" fill="url(#yg)" stroke="#857a66" stroke-width="1.3" stroke-linejoin="round"/><path d="M15,6 L15,14" stroke="#c4283c" stroke-width="2.2"/><path d="M11.5,12 L18.5,12 L15,17 Z" fill="#c4283c"/></svg>
<svg style="left:7.1px;top:166.5px" width="35.8" height="35.8" viewBox="0 0 32 32"><path d="M4,1 L14,1 L14,7 C9,9 9,19 14,21 L14,28 L4,28 Z" fill="url(#yg)" stroke="#857a66" stroke-width="1.3" stroke-linejoin="round"/><path d="M14,7 C9,9 9,19 14,21" fill="none" stroke="#c4283c" stroke-width="1.6" stroke-linecap="round"/><path d="M14,12 L28,12 L28,17 L14,17 Z" fill="url(#yg)" stroke="#857a66" stroke-width="1.3" stroke-linejoin="round"/><path d="M3,14 L9,14" fill="none" stroke="#857a66" stroke-width="2" stroke-linecap="round"/></svg>
<svg style="left:7.1px;top:210.5px" width="35.8" height="35.8" viewBox="0 0 32 32"><path d="M5,1 L17,1 C18,10 22,13 28,16 L28,30 L5,30 Z" fill="url(#yg)" stroke="#857a66" stroke-width="1.3" stroke-linejoin="round"/><path d="M7,7 h6 M10,4 v6" stroke="#2b6c98" stroke-width="1.8"/><path d="M7,15 h6 M10,12 v6" stroke="#2b6c98" stroke-width="1.8"/><path d="M7,23 h6 M10,20 v6" stroke="#2b6c98" stroke-width="1.8"/></svg>
<svg style="left:7.1px;top:254.5px" width="35.8" height="35.8" viewBox="0 0 32 32"><rect x="3" y="4" width="6" height="24" fill="#fff" stroke="#857a66" stroke-width="1"/><path d="M4,9 h3 M4,14 h3 M4,19 h3 M4,24 h3" fill="none" stroke="#555" stroke-width="1" stroke-linecap="round"/><path d="M10,1 L22,1 C23,8 26,11 29,13 L29,30 L10,30 Z" fill="url(#yg)" stroke="#857a66" stroke-width="1.3" stroke-linejoin="round"/><path d="M14,8 h6 M17,5 v6" stroke="#2b6c98" stroke-width="1.8"/><path d="M14,16 h6 M17,13 v6" stroke="#2b6c98" stroke-width="1.8"/><path d="M14,24 h6 M17,21 v6" stroke="#2b6c98" stroke-width="1.8"/></svg>
<svg style="left:7.1px;top:298.5px" width="35.8" height="35.8" viewBox="0 0 32 32"><g transform="translate(3,4)"><path d="M0,3 L4,0 C5,3 8,4 10,1 L14,5 L14,26 L0,26 Z" fill="#e3d7a8" stroke="#8a8a70" stroke-width="1.2" stroke-linejoin="round"/></g><g transform="translate(8,4)"><path d="M0,3 L4,0 C5,3 8,4 10,1 L14,5 L14,26 L0,26 Z" fill="#ecdca0" stroke="#8a8a70" stroke-width="1.2" stroke-linejoin="round"/></g><g transform="translate(14,2)"><path d="M0,3 L4,0 C5,3 8,4 10,1 L14,5 L14,26 L0,26 Z" fill="url(#yg)" stroke="#c8502a" stroke-width="1.2" stroke-linejoin="round"/></g></svg>
<svg style="left:7.1px;top:342.5px" width="35.8" height="35.8" viewBox="0 0 32 32"><path d="M3,2 L14,2 L14,10 L3,10 Z" fill="url(#yg)" stroke="#857a66" stroke-width="1.3" stroke-linejoin="round"/><path d="M17,2 L28,2 L28,10 L17,10 Z" fill="url(#yg)" stroke="#857a66" stroke-width="1.3" stroke-linejoin="round"/><path d="M3,18 L28,18 L28,28 L3,28 Z" fill="url(#yg)" stroke="#857a66" stroke-width="1.3" stroke-linejoin="round"/><path d="M15,9 L15,14" stroke="#c4283c" stroke-width="2.2"/><path d="M11.5,12 L18.5,12 L15,17 Z" fill="#c4283c"/></svg>
<svg style="left:7.1px;top:386.5px" width="35.8" height="35.8" viewBox="0 0 32 32"><path d="M5,5 L9,2 C10,6 14,6 16,3 L19,10 L19,30 L14,30 L12,22 L10,30 L5,30 Z" fill="url(#yg)" stroke="#857a66" stroke-width="1.3" stroke-linejoin="round"/><path d="M10,30 L12,22 L14,30" fill="none" stroke="#2b6c98" stroke-width="1.4" stroke-linecap="round"/><path d="M20,9 h10 M25,4 v10" stroke="#5bb04a" stroke-width="3"/></svg>
<svg style="left:7.1px;top:430.5px" width="35.8" height="35.8" viewBox="0 0 32 32"><path d="M5,7 L9,4 C10,8 14,8 16,5 L19,12 L19,28 L14,28 L12,20 L10,28 L5,28 Z" fill="url(#yg)" stroke="#857a66" stroke-width="1.3" stroke-linejoin="round"/><path d="M10,28 L12,20 L14,28" fill="none" stroke="#2b6c98" stroke-width="1.4" stroke-linecap="round"/><path d="M20,8 h10 M25,3 v10" stroke="#5bb04a" stroke-width="3"/><path d="M5,30 h5 M14,30 h5" fill="none" stroke="#c4283c" stroke-width="1.8" stroke-linecap="round"/></svg>
<svg style="left:7.1px;top:474.5px" width="35.8" height="35.8" viewBox="0 0 32 32"><path d="M3,4 L12,6 C14,10 14,16 12,20 L13,28 L3,28 Z" fill="url(#yg)" stroke="#857a66" stroke-width="1.3" stroke-linejoin="round"/><path d="M17,4 L28,8 L24,24 L15,20 Z" fill="url(#yg)" stroke="#857a66" stroke-width="1.3" stroke-linejoin="round"/><path d="M14,4 L14,20" fill="none" stroke="#3a6a9a" stroke-width="1" stroke-linecap="round" stroke-dasharray="2 1.5"/></svg>
<svg style="left:7.1px;top:518.5px" width="35.8" height="35.8" viewBox="0 0 32 32"><path d="M4,2 L14,3 L22,2 L24,8 L16,12 L14,17 L4,17 L8,10 Z" fill="url(#yg)" stroke="#857a66" stroke-width="1.3" stroke-linejoin="round"/><path d="M8,22 L20,18 L26,22 L22,26 L10,28 Z" fill="url(#yg)" stroke="#857a66" stroke-width="1.3" stroke-linejoin="round"/><path d="M6,24 L12,22 L26,15" fill="none" stroke="#c4283c" stroke-width="1.2" stroke-linecap="round"/></svg>
<svg style="left:7.1px;top:562.5px" width="35.8" height="35.8" viewBox="0 0 32 32"><path d="M3,3 L24,3 L24,28 L3,28 Z" fill="url(#yg)" stroke="#857a66" stroke-width="1.3" stroke-linejoin="round"/><path d="M3,28 L8,16 L29,16 L24,28 Z" fill="url(#yg)" stroke="#857a66" stroke-width="1.3" stroke-linejoin="round"/><path d="M14,2 L14,10" stroke="#c4283c" stroke-width="2.2"/><path d="M10.5,8 L17.5,8 L14,13 Z" fill="#c4283c"/></svg>
<svg style="left:7.1px;top:606.5px" width="35.8" height="35.8" viewBox="0 0 32 32"><path d="M2,1 L12,1 L12,24 L10,24 L8,20 L6,24 L2,24 Z" fill="url(#yg)" stroke="#857a66" stroke-width="1.3" stroke-linejoin="round"/><path d="M4,20 L7,5 L10,20" fill="none" stroke="#c4283c" stroke-width="1.8" stroke-linecap="round"/><path d="M14,1 L26,1 L26,26 L22,28 L20,25 L17,28 L14,26 Z" fill="url(#yg)" stroke="#857a66" stroke-width="1.3" stroke-linejoin="round"/><path d="M18,12 h4 M20,10 v4" stroke="#333" stroke-width="1"/></svg>
<svg style="left:7.1px;top:650.5px" width="35.8" height="35.8" viewBox="0 0 32 32"><path d="M2,1 L12,1 L12,24 L10,28 L8,25 L5,28 L2,24 Z" fill="url(#yg)" stroke="#857a66" stroke-width="1.3" stroke-linejoin="round"/><path d="M5,7 h4 M7,5 v4" stroke="#a02020" stroke-width="1"/><path d="M14,1 L26,1 L26,28 L14,28 Z" fill="url(#yg)" stroke="#857a66" stroke-width="1.3" stroke-linejoin="round"/><path d="M16,26 L20,8 L24,26" fill="none" stroke="#2b6c98" stroke-width="1.8" stroke-linecap="round"/></svg>
<svg style="left:7.1px;top:694.5px" width="35.8" height="35.8" viewBox="0 0 32 32"><path d="M5,1 L5,8" stroke="#c4283c" stroke-width="2.2"/><path d="M1.5,6 L8.5,6 L5,11 Z" fill="#c4283c"/><rect x="13" y="1" width="16" height="10" fill="#fff" stroke="#8a8a8a" stroke-width="0.8"/><path d="M15,3.5 h12 M15,6 h12 M15,8.5 h12" fill="none" stroke="#8a8a9a" stroke-width="1.2" stroke-linecap="round" stroke-dasharray="1.5 1"/><path d="M4,29 L4,22 L8,18 L10,14 L30,14 L30,29 Z" fill="url(#yg)" stroke="#857a66" stroke-width="1.3" stroke-linejoin="round"/><path d="M4,24 L30,24 M8,20 L30,20" fill="none" stroke="#857a66" stroke-width="1" stroke-linecap="round"/><path d="M4,29 L10,19" fill="none" stroke="#c4283c" stroke-width="1.2" stroke-linecap="round"/><circle cx="4" cy="29" r="1.6" fill="#2b6c98"/></svg>
<svg style="left:7.1px;top:738.5px" width="35.8" height="35.8" viewBox="0 0 32 32"><g transform="translate(2,2)"><path d="M0,3 L4,0 C5,3 8,4 10,1 L14,5 L14,26 L0,26 Z" fill="#ecdca0" stroke="#8a8a70" stroke-width="1.2" stroke-linejoin="round"/></g><g transform="translate(6,2)"><path d="M0,3 L4,0 C5,3 8,4 10,1 L14,5 L14,26 L0,26 Z" fill="#ecdca0" stroke="#8a8a70" stroke-width="1.2" stroke-linejoin="round"/></g><g transform="translate(15,14)"><path d="M0,3 L4,0 C5,3 8,4 10,1 L14,5 L14,26 L0,26 Z" fill="url(#yg)" stroke="#857a66" stroke-width="1.2" stroke-linejoin="round"/></g><path d="M9,22 C9,28 12,28 16,26" fill="none" stroke="#c4283c" stroke-width="1.6" stroke-linecap="round"/></svg>
<svg style="left:7.1px;top:782.5px" width="35.8" height="35.8" viewBox="0 0 32 32"><path d="M3,6 L22,6 L22,28 L3,28 Z" fill="#fff7d8" stroke="#555" stroke-width="1.2" stroke-linejoin="round"/><path d="M6,9 L16,9 C16,18 18,22 22,23 L22,25 L6,25 Z" fill="url(#yg)" stroke="#857a66" stroke-width="1.3" stroke-linejoin="round"/><path d="M6,9 L16,9 C16,18 18,22 22,23" fill="none" stroke="#555" stroke-width="1" stroke-linecap="round"/><path d="M18,14 L28,3 L30,5 L20,16 Z" fill="#e8c878" stroke="#857a66" stroke-width="1" stroke-linejoin="round"/></svg>
<svg style="left:7.1px;top:826.5px" width="35.8" height="35.8" viewBox="0 0 32 32"><path d="M3,1 L27,1 L27,10 L3,10 Z" fill="url(#yg)" stroke="#857a66" stroke-width="1.3" stroke-linejoin="round"/><path d="M6,4 L24,4" fill="none" stroke="#857a66" stroke-width="1" stroke-linecap="round"/><path d="M3,16 L27,16 L27,26 L3,26 Z" fill="url(#yg)" stroke="#857a66" stroke-width="1.3" stroke-linejoin="round"/><path d="M8,22 L27,22" fill="none" stroke="#857a66" stroke-width="1" stroke-linecap="round"/><path d="M15,9 L15,15" stroke="#c4283c" stroke-width="2.2"/><path d="M11.5,13 L18.5,13 L15,18 Z" fill="#c4283c"/><circle cx="22" cy="7" r="1.8" fill="#c4283c"/><circle cx="27" cy="28" r="1.8" fill="#c4283c"/></svg>
<svg style="left:7.1px;top:870.5px" width="35.8" height="35.8" viewBox="0 0 32 32"><g transform="translate(3,3)"><path d="M0,3 L4,0 C5,3 8,4 10,1 L14,5 L14,26 L0,26 Z" fill="url(#yg)" stroke="#857a66" stroke-width="1.2" stroke-linejoin="round"/></g><g transform="translate(8,3)"><path d="M0,3 L4,0 C5,3 8,4 10,1 L14,5 L14,26 L0,26 Z" fill="url(#yg)" stroke="#857a66" stroke-width="1.2" stroke-linejoin="round"/></g><g transform="translate(14,3)"><path d="M0,3 L4,0 C5,3 8,4 10,1 L14,5 L14,26 L0,26 Z" fill="url(#yg)" stroke="#857a66" stroke-width="1.2" stroke-linejoin="round"/></g><path d="M3,6 L14,8 L22,4" fill="none" stroke="#c4283c" stroke-width="1" stroke-linecap="round"/><circle cx="3" cy="6" r="1.5" fill="#c4283c"/><circle cx="9" cy="6" r="1.5" fill="#2b6c98"/><circle cx="15" cy="7" r="1.5" fill="#c4283c"/><path d="M20,2 L29,2 L29,7 L20,7 Z" fill="url(#yg)" stroke="#857a66" stroke-width="1.3" stroke-linejoin="round"/></svg>
<svg style="left:7.1px;top:914.5px" width="35.8" height="35.8" viewBox="0 0 32 32"><path d="M2,4 L28,4 L28,30 L18,30 C18,22 12,16 2,16 Z" fill="url(#yg)" stroke="#857a66" stroke-width="1.3" stroke-linejoin="round"/><path d="M2,8 L24,8 L24,30 M2,12 L20,12 L20,30" fill="none" stroke="#c4283c" stroke-width="1.2" stroke-linecap="round"/><path d="M8,16 C14,16 18,20 18,28" fill="none" stroke="#2b6c98" stroke-width="1.6" stroke-linecap="round"/><circle cx="27" cy="3" r="2.6" fill="#c4283c"/><circle cx="23" cy="9" r="2.6" fill="#c4283c"/><circle cx="19" cy="14" r="2.6" fill="#c4283c"/></svg>
<svg style="left:7.1px;top:958.5px" width="35.8" height="35.8" viewBox="0 0 32 32"><g transform="translate(2,4)"><path d="M0,3 L4,0 C5,3 8,4 10,1 L14,5 L14,26 L0,26 Z" fill="url(#yg)" stroke="#c8502a" stroke-width="1.2" stroke-linejoin="round"/></g><g transform="translate(8,3)"><path d="M0,3 L4,0 C5,3 8,4 10,1 L14,5 L14,26 L0,26 Z" fill="url(#yg)" stroke="#c8502a" stroke-width="1.2" stroke-linejoin="round"/></g><g transform="translate(14,2)"><path d="M0,3 L4,0 C5,3 8,4 10,1 L14,5 L14,26 L0,26 Z" fill="url(#yg)" stroke="#857a66" stroke-width="1.2" stroke-linejoin="round"/></g><path d="M3,26 L20,18" fill="none" stroke="#3a6a9a" stroke-width="1.4" stroke-linecap="round"/><circle cx="12" cy="22" r="1.5" fill="#c4283c"/></svg>
<div class="a" style="left:10px;top:111.5px;width:29px;height:2px;background:repeating-linear-gradient(90deg,#9a9cb0 0 2px,transparent 2px 4px)"></div>
<svg style="left:30px;top:1002px" width="16" height="16" viewBox="0 0 16 16"><path d="M1,2 h3 v11 h-3 Z" fill="#333"/><path d="M6,2 L14,8 L6,14 Z" fill="#333"/></svg>
<svg style="left:1.5px;top:531.5px" width="22" height="34" viewBox="0 0 22 34"><path d="M1,1 L1,24 L6.5,19 L11,28.5 L15,26.5 L10.5,17.5 L18,17.5 Z" fill="#fff" stroke="#222" stroke-width="1.3" stroke-linejoin="round"/></svg>
<svg style="left:0;top:0" width="1942" height="1100" viewBox="0 0 1942 1100"><defs><clipPath id="cv"><rect x="52" y="165" width="1652" height="807"/></clipPath></defs><g clip-path="url(#cv)" shape-rendering="crispEdges"><path d="M135.5,229.8 Q200,224 268,209" fill="none" stroke="#33ee5a" stroke-width="1"/><path d="M268.1,209.8 C270.0,213.6 274.7,224.0 279.6,232.7 C284.5,241.4 290.8,253.5 297.6,262.2 C304.4,270.9 313.4,278.0 320.5,285.1 C327.6,292.2 334.1,298.2 340.1,304.8 C346.1,311.4 352.4,317.8 356.5,324.4 C360.6,330.9 362.6,337.0 364.7,344.1 C366.8,351.2 368.2,360.7 369,367 C369.8,373.3 369.8,374.6 369.6,381.7 C369.4,388.8 369.4,401.7 368,409.6 C366.6,417.5 364.4,422.6 361.4,429.2 C358.4,435.8 355.2,442.3 350,448.9 C344.8,455.4 336.9,462.0 330.3,468.5 C323.8,475.0 317.8,479.9 310.7,488.1 C303.6,496.3 294.8,506.7 287.7,517.6 C280.6,528.5 271.4,547.6 268.1,553.6" fill="none" stroke="#33ee5a" stroke-width="1"/><path d="M268,554.7 Q200,538 134.6,527" fill="none" stroke="#33ee5a" stroke-width="1"/><path d="M135,229.8 L135,527" fill="none" stroke="#33ee5a" stroke-width="1"/><path d="M127,382 L369.6,382" fill="none" stroke="#33ee5a" stroke-width="1.0" stroke-dasharray="3 3"/><path d="M252.2,222 L252.2,539" fill="none" stroke="#33ee5a" stroke-width="1.0" stroke-dasharray="3 3"/><path d="M135.5,225.5 L140.0,233.5 L131.0,233.5 Z" fill="none" stroke="#33ee5a" stroke-width="1"/><path d="M268,204 L272.5,212 L263.5,212 Z" fill="none" stroke="#33ee5a" stroke-width="1"/><path d="M252.2,219 L256.7,227 L247.7,227 Z" fill="none" stroke="#33ee5a" stroke-width="1"/><path d="M127,378 L131.5,386 L122.5,386 Z" fill="none" stroke="#33ee5a" stroke-width="1"/><path d="M258,378 L262.5,386 L253.5,386 Z" fill="none" stroke="#33ee5a" stroke-width="1"/><path d="M369.6,378 L374.1,386 L365.1,386 Z" fill="none" stroke="#33ee5a" stroke-width="1"/><path d="M134.6,523 L139.1,531 L130.1,531 Z" fill="none" stroke="#33ee5a" stroke-width="1"/><path d="M268,550 L272.5,558 L263.5,558 Z" fill="none" stroke="#33ee5a" stroke-width="1"/><path d="M252.2,534 L256.7,542 L247.7,542 Z" fill="none" stroke="#33ee5a" stroke-width="1"/><path d="M322,462 L332,472" fill="none" stroke="#33ee5a" stroke-width="1.0"/><ellipse shape-rendering="geometricPrecision" cx="192.6" cy="365.6" rx="24.4" ry="25.2" fill="none" stroke="#e8262e" stroke-width="4.8"/><path d="M180.5,370 L180.5,357.6 M177.5,362.6 L180.5,357.6 L183.5,362.6 M180.5,370 L205.4,370 M199.4,367 L205.4,370 L199.4,373" fill="none" stroke="#33ee5a" stroke-width="1.0"/><path d="M473.2,231.7 L485.5,232.2 L509,233.4 L542.7,234.2 L587,233.4 L611.5,232.2 L641,226.3 L655.7,226.3 Q662,228 666.3,242.4" fill="none" stroke="#000" stroke-width="1.0"/><path d="M473.2,255.5 L503.5,256.3 L607.4,256.3 Q640,248 666.3,242.4" fill="none" stroke="#000" stroke-width="1.0"/><path d="M473.2,231.7 L473.2,255.5" fill="none" stroke="#000" stroke-width="1.0"/><path d="M524,242 L618,242" fill="none" stroke="#000" stroke-width="1.0" stroke-dasharray="3 3"/><path d="M473.2,228 L477.7,236 L468.7,236 Z" fill="none" stroke="#000" stroke-width="1"/><path d="M473.2,251.5 L477.7,259.5 L468.7,259.5 Z" fill="none" stroke="#000" stroke-width="1"/><path d="M524,238 L528.5,246 L519.5,246 Z" fill="none" stroke="#000" stroke-width="1"/><path d="M618,238 L622.5,246 L613.5,246 Z" fill="none" stroke="#000" stroke-width="1"/><path d="M666.3,237 L670.8,245 L661.8,245 Z" fill="none" stroke="#000" stroke-width="1"/><path d="M569,250.5 L569,256.5" fill="none" stroke="#000" stroke-width="2"/><path d="M641.8,228.5 L644,237.5" fill="none" stroke="#000" stroke-width="1.0"/><ellipse shape-rendering="geometricPrecision" cx="568" cy="223.5" rx="23.4" ry="23.4" fill="none" stroke="#e8262e" stroke-width="4.8"/><path d="M559,229.3 L559,217.8 M556,222.8 L559,217.8 L562,222.8 M559,229.3 L583.7,229.3 M577.7,226.3 L583.7,229.3 L577.7,232.3" fill="none" stroke="#000" stroke-width="1.0"/><path d="M433,301.3 L547.7,302.6 L614.8,308.7 L602.5,352 L555.8,343 L503.5,339.3 L433,339" fill="none" stroke="#000" stroke-width="1.0"/><path d="M433,301.3 L433,339" fill="none" stroke="#000" stroke-width="1.0" stroke-dasharray="3 3"/><path d="M482.2,327.5 L570.6,327.5" fill="none" stroke="#000" stroke-width="1.0" stroke-dasharray="3 3"/><path d="M433,297.3 L437.5,305.3 L428.5,305.3 Z" fill="none" stroke="#000" stroke-width="1"/><path d="M433,335 L437.5,343 L428.5,343 Z" fill="none" stroke="#000" stroke-width="1"/><path d="M614.8,304.7 L619.3,312.7 L610.3,312.7 Z" fill="none" stroke="#000" stroke-width="1"/><path d="M602.5,348 L607.0,356 L598.0,356 Z" fill="none" stroke="#000" stroke-width="1"/><path d="M482.2,323.5 L486.7,331.5 L477.7,331.5 Z" fill="none" stroke="#000" stroke-width="1"/><path d="M570.6,323.5 L575.1,331.5 L566.1,331.5 Z" fill="none" stroke="#000" stroke-width="1"/><ellipse shape-rendering="geometricPrecision" cx="527.7" cy="309.1" rx="23.8" ry="20.8" fill="none" stroke="#e8262e" stroke-width="4.8"/><path d="M513.8,315.2 L513.8,304.6 M510.79999999999995,309.6 L513.8,304.6 L516.8,309.6 M513.8,315.2 L538.7,315.2 M532.7,312.2 L538.7,315.2 L532.7,318.2" fill="none" stroke="#000" stroke-width="1.0"/><path d="M706.3,226.4 Q800,232 900.4,237.5 Q960,237 1023.8,233.3 C1045,265 1060,275 1093,275.7 C1130,276 1150,268 1182.7,263.8 L1215.5,379.7 C1195,382 1170,400 1160.3,425 L1160.3,446" fill="none" stroke="#000" stroke-width="1.0"/><path d="M706.3,226.4 C700,270 690,300 682.4,329.5 C677,360 676,390 675.5,425 L675.5,444.5 L1160.3,444.5" fill="none" stroke="#000" stroke-width="1.0"/><path d="M675.5,425 L1160.3,425" fill="none" stroke="#000" stroke-width="1.0" stroke-dasharray="3 3"/><path d="M675.5,435.5 L1160.3,435.5" fill="none" stroke="#000" stroke-width="1.0" stroke-dasharray="3 3"/><path d="M706.3,227 L706.3,435.5" fill="none" stroke="#000" stroke-width="1.0" stroke-dasharray="3 3"/><path d="M900.4,238 L900.4,435.5" fill="none" stroke="#000" stroke-width="1.0" stroke-dasharray="3 3"/><path d="M1023.8,234 L1023.8,435.5" fill="none" stroke="#000" stroke-width="1.0" stroke-dasharray="3 3"/><path d="M810.2,337 L964.7,337" fill="none" stroke="#000" stroke-width="1.0" stroke-dasharray="3 3"/><path d="M706.3,222.4 L710.8,230.4 L701.8,230.4 Z" fill="none" stroke="#000" stroke-width="1"/><path d="M900.4,233.5 L904.9,241.5 L895.9,241.5 Z" fill="none" stroke="#000" stroke-width="1"/><path d="M1023.8,229.3 L1028.3,237.3 L1019.3,237.3 Z" fill="none" stroke="#000" stroke-width="1"/><path d="M1182.7,259.8 L1187.2,267.8 L1178.2,267.8 Z" fill="none" stroke="#000" stroke-width="1"/><path d="M1215.5,375.7 L1220.0,383.7 L1211.0,383.7 Z" fill="none" stroke="#000" stroke-width="1"/><path d="M675.5,421 L680.0,429 L671.0,429 Z" fill="none" stroke="#000" stroke-width="1"/><path d="M675.5,431.5 L680.0,439.5 L671.0,439.5 Z" fill="none" stroke="#000" stroke-width="1"/><path d="M675.5,440.5 L680.0,448.5 L671.0,448.5 Z" fill="none" stroke="#000" stroke-width="1"/><path d="M706.3,431.5 L710.8,439.5 L701.8,439.5 Z" fill="none" stroke="#000" stroke-width="1"/><path d="M900.4,431.5 L904.9,439.5 L895.9,439.5 Z" fill="none" stroke="#000" stroke-width="1"/><path d="M1023.8,431.5 L1028.3,439.5 L1019.3,439.5 Z" fill="none" stroke="#000" stroke-width="1"/><path d="M1160.3,421 L1164.8,429 L1155.8,429 Z" fill="none" stroke="#000" stroke-width="1"/><path d="M1160.3,431.5 L1164.8,439.5 L1155.8,439.5 Z" fill="none" stroke="#000" stroke-width="1"/><path d="M1160.3,440.5 L1164.8,448.5 L1155.8,448.5 Z" fill="none" stroke="#000" stroke-width="1"/><path d="M810.2,333 L814.7,341 L805.7,341 Z" fill="none" stroke="#000" stroke-width="1"/><path d="M964.7,333 L969.2,341 L960.2,341 Z" fill="none" stroke="#000" stroke-width="1"/><path d="M666.3,237 L670.8,245 L661.8,245 Z" fill="none" stroke="#000" stroke-width="1"/><path d="M775.9,431.5 L775.9,439.5" fill="none" stroke="#000" stroke-width="1"/><path d="M778.9,431.5 L778.9,439.5" fill="none" stroke="#000" stroke-width="1"/><path d="M839.2,431.5 L839.2,439.5" fill="none" stroke="#000" stroke-width="1"/><path d="M966.0,431.5 L966.0,439.5" fill="none" stroke="#000" stroke-width="1"/><path d="M1090.1,431.5 L1090.1,439.5" fill="none" stroke="#000" stroke-width="1"/><path d="M1093.1,431.5 L1093.1,439.5" fill="none" stroke="#000" stroke-width="1"/><path d="M1029.0,431.5 L1029.0,439.5" fill="none" stroke="#000" stroke-width="1"/><ellipse shape-rendering="geometricPrecision" cx="887" cy="325.6" rx="25.6" ry="30.6" fill="none" stroke="#e8262e" stroke-width="4.8"/><path d="M875.6,324.4 L875.6,313 M872.6,318 L875.6,313 L878.6,318 M875.6,324.4 L900.4,324.4 M894.4,321.4 L900.4,324.4 L894.4,327.4" fill="none" stroke="#000" stroke-width="1.0"/><path d="M659.4,471.4 L1143.3,471.4" fill="none" stroke="#000" stroke-width="1.0"/><path d="M659.4,481.9 L1143.3,481.9" fill="none" stroke="#000" stroke-width="1.0" stroke-dasharray="3 3"/><path d="M659.4,491.7 L1143.3,491.7" fill="none" stroke="#000" stroke-width="1.0" stroke-dasharray="3 3"/><path d="M659.4,471.4 L659.4,491.7 C660,530 662,560 672.9,604.3 C680,635 688,660 689.3,691 Q790,680 884.3,677.5 L1007.4,683.5 C1020,665 1030,650 1064,640.2 Q1090,638 1110,642 L1167.2,652.1 L1198.5,537.1 C1170,530 1150,515 1143.3,491.7 L1143.3,471.4" fill="none" stroke="#000" stroke-width="1.0"/><path d="M690.2,481.9 L690.2,691" fill="none" stroke="#000" stroke-width="1.0" stroke-dasharray="3 3"/><path d="M884.3,481.9 L884.3,677.5" fill="none" stroke="#000" stroke-width="1.0" stroke-dasharray="3 3"/><path d="M1007.4,481.9 L1007.4,683.5" fill="none" stroke="#000" stroke-width="1.0" stroke-dasharray="3 3"/><path d="M1044.7,481.9 L1044.7,617.8" fill="none" stroke="#000" stroke-width="1.0" stroke-dasharray="3 3"/><path d="M935.7,520.7 L1044.7,520.7 M935.7,520.7 L935.7,617.8 L1044.7,617.8" fill="none" stroke="#000" stroke-width="1.0" stroke-dasharray="3 3"/><path d="M1044.7,537.1 L1198.5,537.1" fill="none" stroke="#000" stroke-width="1.0" stroke-dasharray="3 3"/><path d="M1044.7,521 L964,587.9 L995.4,617.8 L1044.7,537" fill="none" stroke="#000" stroke-width="1.0" stroke-dasharray="3 3"/><path d="M793.8,580.4 L949.1,580.4" fill="none" stroke="#000" stroke-width="1.0" stroke-dasharray="3 3"/><path d="M659.4,467.4 L663.9,475.4 L654.9,475.4 Z" fill="none" stroke="#000" stroke-width="1"/><path d="M659.4,477.9 L663.9,485.9 L654.9,485.9 Z" fill="none" stroke="#000" stroke-width="1"/><path d="M659.4,487.7 L663.9,495.7 L654.9,495.7 Z" fill="none" stroke="#000" stroke-width="1"/><path d="M690.2,477.9 L694.7,485.9 L685.7,485.9 Z" fill="none" stroke="#000" stroke-width="1"/><path d="M884.3,477.9 L888.8,485.9 L879.8,485.9 Z" fill="none" stroke="#000" stroke-width="1"/><path d="M1007.4,477.9 L1011.9,485.9 L1002.9,485.9 Z" fill="none" stroke="#000" stroke-width="1"/><path d="M1044.7,477.9 L1049.2,485.9 L1040.2,485.9 Z" fill="none" stroke="#000" stroke-width="1"/><path d="M1143.3,467.4 L1147.8,475.4 L1138.8,475.4 Z" fill="none" stroke="#000" stroke-width="1"/><path d="M1143.3,477.9 L1147.8,485.9 L1138.8,485.9 Z" fill="none" stroke="#000" stroke-width="1"/><path d="M1143.3,487.7 L1147.8,495.7 L1138.8,495.7 Z" fill="none" stroke="#000" stroke-width="1"/><path d="M935.7,516.7 L940.2,524.7 L931.2,524.7 Z" fill="none" stroke="#000" stroke-width="1"/><path d="M1044.7,516.7 L1049.2,524.7 L1040.2,524.7 Z" fill="none" stroke="#000" stroke-width="1"/><path d="M1044.7,533.1 L1049.2,541.1 L1040.2,541.1 Z" fill="none" stroke="#000" stroke-width="1"/><path d="M1198.5,533.1 L1203.0,541.1 L1194.0,541.1 Z" fill="none" stroke="#000" stroke-width="1"/><path d="M935.7,613.8 L940.2,621.8 L931.2,621.8 Z" fill="none" stroke="#000" stroke-width="1"/><path d="M995.4,613.8 L999.9,621.8 L990.9,621.8 Z" fill="none" stroke="#000" stroke-width="1"/><path d="M1044.7,613.8 L1049.2,621.8 L1040.2,621.8 Z" fill="none" stroke="#000" stroke-width="1"/><path d="M964,583.9 L968.5,591.9 L959.5,591.9 Z" fill="none" stroke="#000" stroke-width="1"/><path d="M793.8,576.4 L798.3,584.4 L789.3,584.4 Z" fill="none" stroke="#000" stroke-width="1"/><path d="M949.1,576.4 L953.6,584.4 L944.6,584.4 Z" fill="none" stroke="#000" stroke-width="1"/><path d="M690.2,687 L694.7,695 L685.7,695 Z" fill="none" stroke="#000" stroke-width="1"/><path d="M884.3,673.5 L888.8,681.5 L879.8,681.5 Z" fill="none" stroke="#000" stroke-width="1"/><path d="M1007.4,679.5 L1011.9,687.5 L1002.9,687.5 Z" fill="none" stroke="#000" stroke-width="1"/><path d="M1167.2,648.1 L1171.7,656.1 L1162.7,656.1 Z" fill="none" stroke="#000" stroke-width="1"/><path d="M759.5,477.9 L759.5,485.9" fill="none" stroke="#000" stroke-width="1"/><path d="M762.5,477.9 L762.5,485.9" fill="none" stroke="#000" stroke-width="1"/><path d="M822.8,477.9 L822.8,485.9" fill="none" stroke="#000" stroke-width="1"/><path d="M950.6,477.9 L950.6,485.9" fill="none" stroke="#000" stroke-width="1"/><path d="M1013.4,477.9 L1013.4,485.9" fill="none" stroke="#000" stroke-width="1"/><path d="M1076.0,477.9 L1076.0,485.9" fill="none" stroke="#000" stroke-width="2"/><ellipse shape-rendering="geometricPrecision" cx="868.5" cy="564" rx="27" ry="25.6" fill="none" stroke="#e8262e" stroke-width="4.8"/><path d="M860.1,568.5 L860.1,556.6 M857.1,561.6 L860.1,556.6 L863.1,561.6 M860.1,568.5 L885,568.5 M879,565.5 L885,568.5 L879,571.5" fill="none" stroke="#000" stroke-width="1.0"/><path d="M680.3,718.8 Q780,724 874,726 Q940,725 997.6,722.7 C1010,745 1030,755 1077.7,756.8 C1110,758 1130,756 1157.2,751.9 L1183,745.4 L1209,738.3 L1241.5,855 C1225,858 1205,875 1202.6,932" fill="none" stroke="#000" stroke-width="1.0"/><path d="M680.3,718.8 C676,760 670,790 659.2,836.3 C653,870 650,900 649.5,932" fill="none" stroke="#000" stroke-width="1.0"/><path d="M649.5,932 L1241.5,932" fill="none" stroke="#000" stroke-width="1.0" stroke-dasharray="3 3"/><path d="M680.3,719 L680.3,932" fill="none" stroke="#000" stroke-width="1.0" stroke-dasharray="3 3"/><path d="M874,727 L874,932" fill="none" stroke="#000" stroke-width="1.0" stroke-dasharray="3 3"/><path d="M997.6,723 L997.6,932" fill="none" stroke="#000" stroke-width="1.0" stroke-dasharray="3 3"/><path d="M1241.5,738.3 L1241.5,932" fill="none" stroke="#000" stroke-width="1.0" stroke-dasharray="3 3"/><path d="M1202.6,855 L1202.6,932" fill="none" stroke="#000" stroke-width="1.0" stroke-dasharray="3 3"/><path d="M1209,738.3 L1241.5,738.3" fill="none" stroke="#000" stroke-width="1.0" stroke-dasharray="3 3"/><path d="M1202.6,855 L1241.5,855" fill="none" stroke="#000" stroke-width="1.0" stroke-dasharray="3 3"/><path d="M1157.2,751.9 L1189.6,868.7" fill="none" stroke="#000" stroke-width="1.0" stroke-dasharray="3 3"/><path d="M1183,745.4 L1215.6,860.6" fill="none" stroke="#000" stroke-width="1.0" stroke-dasharray="3 3"/><path d="M767.9,825.5 L923,825.5" fill="none" stroke="#000" stroke-width="1.0" stroke-dasharray="3 3"/><path d="M680.3,714.8 L684.8,722.8 L675.8,722.8 Z" fill="none" stroke="#000" stroke-width="1"/><path d="M997.6,718.7 L1002.1,726.7 L993.1,726.7 Z" fill="none" stroke="#000" stroke-width="1"/><path d="M1157.2,747.9 L1161.7,755.9 L1152.7,755.9 Z" fill="none" stroke="#000" stroke-width="1"/><path d="M1183,741.4 L1187.5,749.4 L1178.5,749.4 Z" fill="none" stroke="#000" stroke-width="1"/><path d="M1209,734.3 L1213.5,742.3 L1204.5,742.3 Z" fill="none" stroke="#000" stroke-width="1"/><path d="M1241.5,734.3 L1246.0,742.3 L1237.0,742.3 Z" fill="none" stroke="#000" stroke-width="1"/><path d="M1241.5,851 L1246.0,859 L1237.0,859 Z" fill="none" stroke="#000" stroke-width="1"/><path d="M1202.6,851 L1207.1,859 L1198.1,859 Z" fill="none" stroke="#000" stroke-width="1"/><path d="M1215.6,856.6 L1220.1,864.6 L1211.1,864.6 Z" fill="none" stroke="#000" stroke-width="1"/><path d="M1189.6,864.7 L1194.1,872.7 L1185.1,872.7 Z" fill="none" stroke="#000" stroke-width="1"/><path d="M680.3,928 L684.8,936 L675.8,936 Z" fill="none" stroke="#000" stroke-width="1"/><path d="M874,928 L878.5,936 L869.5,936 Z" fill="none" stroke="#000" stroke-width="1"/><path d="M997.6,928 L1002.1,936 L993.1,936 Z" fill="none" stroke="#000" stroke-width="1"/><path d="M1202.6,928 L1207.1,936 L1198.1,936 Z" fill="none" stroke="#000" stroke-width="1"/><path d="M1241.5,928 L1246.0,936 L1237.0,936 Z" fill="none" stroke="#000" stroke-width="1"/><path d="M767.9,821.5 L772.4,829.5 L763.4,829.5 Z" fill="none" stroke="#000" stroke-width="1"/><path d="M923,821.5 L927.5,829.5 L918.5,829.5 Z" fill="none" stroke="#000" stroke-width="1"/><path d="M874,722 L878,726 L874,730 L870,726 Z" fill="none" stroke="#000" stroke-width="1"/><path d="M649.5,928 L653.5,932 L649.5,936 L645.5,932 Z" fill="none" stroke="#000" stroke-width="1"/><ellipse shape-rendering="geometricPrecision" cx="845.7" cy="804.5" rx="28.7" ry="22.7" fill="none" stroke="#e8262e" stroke-width="4.8"/><path d="M833.7,813.5 L833.7,802.2 M830.7,807.2 L833.7,802.2 L836.7,807.2 M833.7,813.5 L858.7,813.5 M852.7,810.5 L858.7,813.5 L852.7,816.5" fill="none" stroke="#000" stroke-width="1.0"/><path d="M1520.7,321.5 L1628.3,321.5 L1628.3,418.5 L1520.7,418.5 Z" fill="none" stroke="#000" stroke-width="1.0"/><path d="M1547.3,369.4 L1601,369.4" fill="none" stroke="#000" stroke-width="1.0" stroke-dasharray="3 3"/><path d="M1627,322.7 L1547.9,388.9 L1579.2,417.3 L1627,322.7" fill="none" stroke="#000" stroke-width="1.0" stroke-dasharray="3 3"/><path d="M1520.7,317.5 L1525.2,325.5 L1516.2,325.5 Z" fill="none" stroke="#000" stroke-width="1"/><path d="M1628.3,317.5 L1632.8,325.5 L1623.8,325.5 Z" fill="none" stroke="#000" stroke-width="1"/><path d="M1520.7,414.5 L1525.2,422.5 L1516.2,422.5 Z" fill="none" stroke="#000" stroke-width="1"/><path d="M1628.3,414.5 L1632.8,422.5 L1623.8,422.5 Z" fill="none" stroke="#000" stroke-width="1"/><path d="M1579.2,414.5 L1583.7,422.5 L1574.7,422.5 Z" fill="none" stroke="#000" stroke-width="1"/><path d="M1547.3,365.4 L1551.8,373.4 L1542.8,373.4 Z" fill="none" stroke="#000" stroke-width="1"/><path d="M1601,365.4 L1605.5,373.4 L1596.5,373.4 Z" fill="none" stroke="#000" stroke-width="1"/><path d="M1547.9,384.9 L1552.4,392.9 L1543.4,392.9 Z" fill="none" stroke="#000" stroke-width="1"/><ellipse shape-rendering="geometricPrecision" cx="1575.6" cy="352" rx="24.2" ry="24.2" fill="none" stroke="#e8262e" stroke-width="5.2"/><path d="M1562,357 L1562,345.8 M1559,350.8 L1562,345.8 L1565,350.8 M1562,357 L1586.3,357 M1580.3,354 L1586.3,357 L1580.3,360" fill="none" stroke="#000" stroke-width="1.0"/></g></svg>
<div class="a" style="left:590px;top:1046px;width:48px;height:40px;background:#3a3f45"></div>
<div class="a" style="left:152.6px;top:1084px;width:40.2px;height:2px;background:#7bb8e8"></div>
<div class="a" style="left:201.6px;top:1084px;width:40.1px;height:2px;background:#7bb8e8"></div>
<div class="a" style="left:251.0px;top:1084px;width:40.0px;height:2px;background:#7bb8e8"></div>
<div class="a" style="left:349.0px;top:1084px;width:40.0px;height:2px;background:#7bb8e8"></div>
<div class="a" style="left:398.0px;top:1084px;width:40.0px;height:2px;background:#7bb8e8"></div>
<div class="a" style="left:447.0px;top:1084px;width:40.0px;height:2px;background:#7bb8e8"></div>
<div class="a" style="left:496.0px;top:1084px;width:39.6px;height:2px;background:#7bb8e8"></div>
<div class="a" style="left:544.8px;top:1084px;width:40.0px;height:2px;background:#7bb8e8"></div>
<div class="a" style="left:590.4px;top:1084px;width:47.3px;height:2px;background:#7bb8e8"></div>
<div class="a" style="left:642.7px;top:1084px;width:40.3px;height:2px;background:#7bb8e8"></div>
<div class="a" style="left:692.0px;top:1084px;width:39.7px;height:2px;background:#7bb8e8"></div>
<svg style="left:0;top:0" width="1942" height="1100" viewBox="0 0 1942 1100"><path d="M17,1059 L23.5,1058 L23.5,1065.3 L17,1065.3 Z M24.8,1057.8 L33,1056.6 L33,1065.3 L24.8,1065.3 Z M17,1066.6 L23.5,1066.6 L23.5,1073.8 L17,1073 Z M24.8,1066.6 L33,1066.6 L33,1075.4 L24.8,1074.2 Z" fill="#fff"/><circle cx="75" cy="1063.5" r="7" fill="none" stroke="#fff" stroke-width="1.8"/><path d="M70,1068.5 L63,1075.5" stroke="#fff" stroke-width="2"/><rect x="112" y="1054" width="24" height="23" rx="2" fill="#5aa0d0"/><rect x="112" y="1054" width="12" height="11" fill="#e8a040"/><rect x="124" y="1065" width="12" height="12" fill="#60b060"/><path d="M116,1058 H132 V1073 H119 V1062 H129 V1069" fill="none" stroke="#fff" stroke-width="2"/><circle cx="173" cy="1066" r="12" fill="#dd4b3e"/><path d="M173,1066 L162.6,1072 A12,12 0 0,0 185,1066 Z" fill="#2da94f"/><path d="M173,1066 L185,1066 A12,12 0 0,1 173,1078 Z" fill="#ffcd40"/><path d="M173,1066 L173,1078 A12,12 0 0,1 161.6,1062 Z" fill="#2da94f"/><circle cx="173" cy="1066" r="5.5" fill="#fff"/><circle cx="173" cy="1066" r="4.3" fill="#4688f1"/><circle cx="221" cy="1065" r="11" fill="#1a6fe0"/><path d="M212,1061 C212,1055 230,1055 230,1063 C230,1071 216,1072 212,1070 Z" fill="#fff"/><circle cx="227" cy="1072" r="7" fill="#e02020"/><text x="227" y="1076" font-family="Liberation Sans" font-size="9" fill="#fff" text-anchor="middle">5+</text><rect x="263" y="1054" width="17" height="24" fill="#5a7a9a"/><rect x="265" y="1056" width="13" height="4" fill="#a0c8e8"/><path d="M265,1062 h3 v3 h-3 Z M269.5,1062 h3 v3 h-3 Z M274,1062 h3 v3 h-3 Z M265,1066.5 h3 v3 h-3 Z M269.5,1066.5 h3 v3 h-3 Z M274,1066.5 h3 v7.5 h-3 Z M265,1071 h3 v3 h-3 Z M269.5,1071 h3 v3 h-3 Z" fill="#e8eef4"/><ellipse cx="320" cy="1063" rx="12" ry="7" transform="rotate(-20 320 1063)" fill="#d8c8d8" stroke="#9a6a8a" stroke-width="1"/><path d="M320,1060 L326,1074 M324,1058 L318,1072" stroke="#2a8ac8" stroke-width="1.5"/><path d="M357,1056 L366,1056 L368,1059 L382,1059 L382,1076 L357,1076 Z" fill="#e8d878" stroke="#8a8a3a" stroke-width="0.8"/><path d="M360,1066 L378,1066 L380,1070 L360,1070 Z" fill="#8a8a90"/><path d="M362,1070 h14" stroke="#d02020" stroke-width="1"/><path d="M406,1057 L414,1057 L416,1060 L430,1060 L430,1076 L406,1076 Z" fill="#f5c842"/><path d="M406,1063 L430,1063 L430,1076 L406,1076 Z" fill="#ffd866"/><rect x="413" y="1068" width="10" height="8" fill="#2a7ad0"/><circle cx="467" cy="1066" r="11.5" fill="#1a8ad8"/><path d="M457,1070 C458,1058 476,1056 478,1066 C478,1070 472,1071 468,1070 C464,1069 462,1066 466,1064" fill="none" stroke="#5ed07a" stroke-width="3.5"/><circle cx="468" cy="1067" r="3.5" fill="#1a6ab0"/><circle cx="516" cy="1066" r="11.5" fill="#1ed760"/><path d="M509,1062 C514,1060 520,1061 524,1063 M510,1066 C514,1064.5 519,1065 522,1067 M511,1070 C514,1069 518,1069.5 521,1071" fill="none" stroke="#191414" stroke-width="1.8" stroke-linecap="round"/><rect x="557" y="1055" width="18" height="22" fill="#21a366"/><rect x="566" y="1055" width="9" height="22" fill="#33c481"/><rect x="553" y="1060" width="12" height="12" fill="#107c41"/><path d="M556,1063 L562,1069 M562,1063 L556,1069" stroke="#fff" stroke-width="1.6"/><path d="M604,1056 L620,1054 L624,1062 L621,1078 L606,1078 L602,1066 Z" fill="#f4f0f0" stroke="#aaa" stroke-width="0.8"/><path d="M606,1060 L616,1058 L619,1074 L608,1074 Z" fill="#c82828"/><path d="M605,1076 L624,1056" stroke="#e8c030" stroke-width="2.2"/><circle cx="610" cy="1059" r="3" fill="#f8d0b0"/><circle cx="662" cy="1066" r="12" fill="#2a86d8"/><rect x="655" y="1060" width="14" height="10" fill="#fff"/><rect x="657" y="1062" width="10" height="6" fill="#2a86d8"/><path d="M659,1073 h6" stroke="#fff" stroke-width="1.5"/><rect x="700" y="1054" width="22" height="23" fill="#fff" stroke="#888" stroke-width="0.8"/><path d="M702,1057 h10 M702,1060 h6 M714,1057 h6" stroke="#333" stroke-width="1.4"/><rect x="708" y="1062" width="13" height="12" fill="#1a40c8"/><rect x="708" y="1068" width="7" height="6" fill="#f0d020"/><path d="M715,1070 L721,1066 L721,1074 Z" fill="#d02020"/><path d="M1672,1069 L1678,1063 L1684,1069" fill="none" stroke="#fff" stroke-width="1.4"/><rect x="1697" y="1061" width="7" height="8" rx="1" fill="none" stroke="#fff" stroke-width="1.3"/><path d="M1704,1063 L1708,1061 L1708,1069 L1704,1067" fill="none" stroke="#fff" stroke-width="1.2"/><path d="M1698,1058 A6,6 0 0,1 1706,1058 M1698,1072 A6,6 0 0,0 1706,1072" fill="none" stroke="#ccc" stroke-width="1"/><path d="M1718,1063 h3 l4,-4 v14 l-4,-4 h-3 Z" fill="none" stroke="#fff" stroke-width="1.2"/><path d="M1727,1063 A4,4 0 0,1 1727,1069 M1729.5,1061 A7,7 0 0,1 1729.5,1071 M1732,1059 A10,10 0 0,1 1732,1073" fill="none" stroke="#fff" stroke-width="1.2"/><path d="M1746,1072 A13,13 0 0,1 1758,1060 M1749,1072 A10,10 0 0,1 1758,1063 M1752,1072 A7,7 0 0,1 1758,1066" fill="none" stroke="#fff" stroke-width="1.1"/><circle cx="1756" cy="1071" r="1.6" fill="#fff"/><path d="M1880,1058 h16 v10 h-9 l-4,4 v-4 h-3 Z" fill="#fff"/><path d="M1883,1061 h10 M1883,1064 h10" stroke="#222" stroke-width="1"/><circle cx="1896" cy="1073" r="7.5" fill="#2a2e32" stroke="#aaa" stroke-width="1"/><text x="1896" y="1077" font-family="Liberation Sans" font-weight="bold" font-size="11" fill="#fff" text-anchor="middle">2</text></svg>
<svg style="left:3px;top:6px" width="18" height="18" viewBox="0 0 18 18"><path d="M2,2 L11,2 L13,5 L13,11 L2,11 Z" fill="#3aa8c8"/><path d="M3,3 L13,10 M3,10 L12,3" stroke="#1a3a7a" stroke-width="2"/><path d="M8,6 L16,1" stroke="#6ac84a" stroke-width="2"/><rect x="2" y="11.5" width="15" height="4.5" rx="1.5" fill="#e8d890" stroke="#8a7a40" stroke-width="0.8"/><path d="M4.5,12.5 v2.5 M7,12.5 v2.5 M9.5,12.5 v2.5 M12,12.5 v2.5 M14.5,12.5 v2.5" stroke="#333" stroke-width="0.9"/></svg>
<svg style="left:30px;top:8px" width="16" height="16" viewBox="0 0 16 16"><rect x="0.5" y="0.5" width="14.5" height="15" rx="1" fill="#3a7ac0" stroke="#4a6a9a" stroke-width="1"/><rect x="2.5" y="1" width="10.5" height="7.5" fill="#fafbfd" stroke="#8a9ab8" stroke-width="0.6"/><rect x="4" y="10.5" width="2.5" height="5" fill="#c8d4e8"/></svg>
<svg style="left:52px;top:8px" width="17" height="16" viewBox="0 0 17 16"><rect x="0.5" y="3" width="13" height="12.5" rx="1" fill="#3a7ac0" stroke="#4a6a9a" stroke-width="1"/><rect x="2.5" y="3.5" width="9" height="5.5" fill="#fafbfd"/><rect x="4" y="11" width="2.5" height="4.5" fill="#c8d4e8"/><path d="M7,10 L14.5,1.5 L16.5,3.5 L9,12 Z" fill="#d8b878" stroke="#9a7a40" stroke-width="0.6"/></svg>
<svg style="left:74px;top:8px" width="17" height="16" viewBox="0 0 17 16"><rect x="4" y="0.5" width="9" height="5" fill="#fff" stroke="#9a9a9a"/><rect x="0.5" y="5" width="16" height="7" rx="1.5" fill="#c8c8c8" stroke="#8a8a8a"/><rect x="3.5" y="9" width="10" height="6" fill="#fff" stroke="#9a9a9a"/></svg>
<svg style="left:96px;top:11px" width="8" height="10" viewBox="0 0 8 10"><path d="M1,1 h6 v1.5 h-6 Z" fill="#222"/><path d="M0.5,4 h7 L4,9 Z" fill="#222"/></svg>
<div class="a" style="left:1799px;top:17px;width:11px;height:1px;background:#111"></div>
<svg style="left:1843px;top:10px" width="14" height="14" viewBox="0 0 14 14"><rect x="1.5" y="4.5" width="8" height="8" fill="none" stroke="#111" stroke-width="1.1"/><path d="M4.5,4.5 V1.5 H12.5 V9.5 H9.5" fill="none" stroke="#111" stroke-width="1.1"/></svg>
<svg style="left:1889px;top:10px" width="14" height="14" viewBox="0 0 14 14"><path d="M1.5,1.5 L12.5,12.5 M12.5,1.5 L1.5,12.5" stroke="#111" stroke-width="1.2"/></svg>
<svg style="left:1900px;top:36px" width="16" height="16" viewBox="0 0 16 16"><circle cx="8" cy="8" r="7" fill="#2a5fc8" stroke="#8ab0e8" stroke-width="1"/><text x="8" y="12" font-family="Liberation Sans" font-weight="bold" font-size="10" fill="#fff" text-anchor="middle">?</text></svg>
<svg style="left:1870px;top:110px" width="50" height="14" viewBox="0 0 50 14"><path d="M2,4 H12 L7,10 Z" fill="#222"/><path d="M21,2 h6 v6 h-6 Z M19,8 h10 M24,8 v5" fill="none" stroke="#222" stroke-width="1.4"/><path d="M37,2 L46,11 M46,2 L37,11" stroke="#222" stroke-width="1.5"/></svg>
<svg style="left:1894px;top:717px" width="28" height="70" viewBox="0 0 28 70"><path d="M1.5,1.5 H27 V67 L1.5,42.5 Z" fill="#f7f7f7" stroke="#8e8e96" stroke-width="1"/><path d="M20,11 L15,11 L9,20 L15,29 L20,29 L14,20 Z" fill="#2e86b5"/></svg>
<svg style="left:464px;top:1010px" width="14" height="10" viewBox="0 0 14 10"><path d="M2,2 L7,7 L12,2" fill="none" stroke="#333" stroke-width="1.3"/></svg>
<svg style="left:345px;top:1005px" width="12" height="16" viewBox="0 0 12 16"><circle cx="3" cy="12" r="0.9" fill="#111"/><circle cx="6" cy="12" r="0.9" fill="#111"/><circle cx="9" cy="12" r="0.9" fill="#111"/></svg>
<span id="t0" class="tx" style="left:819.30px;top:10.13px;font-size:11.3px;font-weight:normal;color:#111;transform:scaleX(0.9896);-webkit-text-stroke:0.45px #111;">C:\1-POSX2025\1-CMT215  -  8 piece(s) - Pattern Design</span>
<span id="t1" class="tx" style="left:13.42px;top:37.14px;font-size:12px;font-weight:normal;color:#fff;transform:scaleX(0.9778);">File</span>
<span id="t2" class="tx" style="left:60.38px;top:40.04px;font-size:12px;font-weight:normal;color:#1a1a1a;transform:scaleX(0.9229);">Create</span>
<span id="t3" class="tx" style="left:121.43px;top:40.04px;font-size:12px;font-weight:normal;color:#1a1a1a;transform:scaleX(0.9700);">Edit</span>
<span id="t4" class="tx" style="left:169.35px;top:40.04px;font-size:12px;font-weight:normal;color:#1a1a1a;transform:scaleX(1.0529);">Modify</span>
<span id="t5" class="tx" style="left:235.10px;top:40.04px;font-size:12px;font-weight:normal;color:#1a1a1a;transform:scaleX(0.9340);">Advanced</span>
<span id="t6" class="tx" style="left:314.40px;top:40.04px;font-size:12px;font-weight:normal;color:#1a1a1a;transform:scaleX(0.9267);">Verify</span>
<span id="t7" class="tx" style="left:369.66px;top:40.04px;font-size:12px;font-weight:normal;color:#1a1a1a;transform:scaleX(0.9375);">Grade</span>
<span id="t8" class="tx" style="left:429.50px;top:40.04px;font-size:12px;font-weight:normal;color:#1a1a1a;transform:scaleX(0.9486);">Wizard</span>
<span id="t9" class="tx" style="left:492.60px;top:40.04px;font-size:12px;font-weight:normal;color:#1a1a1a;">Draft</span>
<span id="t10" class="tx" style="left:547.20px;top:40.04px;font-size:12px;font-weight:normal;color:#1a1a1a;transform:scaleX(0.9500);">View</span>
<span id="t11" class="tx" style="left:82.31px;top:111.84px;font-size:12px;font-weight:normal;color:#1a1a1a;transform:scaleX(0.8888);">1-CWP151  -  15 piece(s)</span>
<span id="t12" class="tx" style="left:232.11px;top:111.84px;font-size:12px;font-weight:normal;color:#1a1a1a;transform:scaleX(0.8896);">1-CWP151  -  15 piece(s)</span>
<span id="t13" class="tx" style="left:382.41px;top:111.84px;font-size:12px;font-weight:normal;color:#1a1a1a;transform:scaleX(0.8947);">1-CMT216  -  15 piece(s)</span>
<span id="t14" class="tx" style="left:532.90px;top:111.84px;font-size:12px;font-weight:bold;color:#000;transform:scaleX(0.9016);">1-CMT215  -  8 piece(s)</span>
<span id="t15" class="tx" style="left:58.13px;top:146.04px;font-size:12px;font-weight:normal;color:#111;transform:scaleX(0.8667);">1,1</span>
<span id="t16" class="tx" style="left:138.13px;top:146.04px;font-size:12px;font-weight:normal;color:#111;transform:scaleX(0.8667);">1,1</span>
<span id="t17" class="tx" style="left:218.13px;top:146.04px;font-size:12px;font-weight:normal;color:#111;transform:scaleX(0.8667);">1,1</span>
<span id="t18" class="tx" style="left:298.13px;top:146.04px;font-size:12px;font-weight:normal;color:#111;transform:scaleX(0.8667);">1,1</span>
<span id="t19" class="tx" style="left:378.13px;top:146.04px;font-size:12px;font-weight:normal;color:#111;transform:scaleX(0.8667);">1,1</span>
<span id="t20" class="tx" style="left:458.13px;top:146.04px;font-size:12px;font-weight:normal;color:#111;transform:scaleX(0.8667);">1,1</span>
<span id="t21" class="tx" style="left:538.13px;top:146.04px;font-size:12px;font-weight:normal;color:#111;transform:scaleX(0.8667);">1,1</span>
<span id="t22" class="tx" style="left:1732.41px;top:110.54px;font-size:12px;font-weight:normal;color:#1a1a1a;transform:scaleX(0.9852);">User Input</span>
<span id="t23" class="tx" style="left:1743.00px;top:238.54px;font-size:12px;font-weight:normal;color:#1a1a1a;transform:scaleX(0.8833);">Value Input</span>
<span id="t24" class="tx" style="left:1740.51px;top:292.24px;font-size:12px;font-weight:normal;color:#000;transform:scaleX(0.8900);">Beg</span>
<span id="t25" class="tx" style="left:1740.51px;top:316.24px;font-size:12px;font-weight:normal;color:#000;transform:scaleX(0.8900);">End</span>
<span id="t26" class="tx" style="left:1740.57px;top:340.84px;font-size:12px;font-weight:normal;color:#000;transform:scaleX(0.8350);">Dist</span>
<span id="t27" class="tx" style="left:1845.00px;top:292.24px;font-size:12px;font-weight:normal;color:#000;transform:scaleX(0.9125);">X</span>
<span id="t28" class="tx" style="left:1845.40px;top:316.24px;font-size:12px;font-weight:normal;color:#000;transform:scaleX(0.8625);">Y</span>
<span id="t29" class="tx" style="left:1833.20px;top:340.84px;font-size:12px;font-weight:normal;color:#000;transform:scaleX(0.8667);">Ang</span>
<span id="t30" class="tx" style="left:1747.73px;top:374.84px;font-size:12px;font-weight:normal;color:#000;transform:scaleX(0.8686);">Cursor</span>
<span id="t31" class="tx" style="left:1805.00px;top:374.84px;font-size:12px;font-weight:normal;color:#000;transform:scaleX(0.8978);">Tracking</span>
<span id="t32" class="tx" style="left:1861.71px;top:374.84px;font-size:12px;font-weight:normal;color:#9a9a9a;transform:scaleX(0.8925);">Calculator</span>
<span id="t33" class="tx" style="left:1755.50px;top:402.54px;font-size:12px;font-weight:normal;color:#000;transform:scaleX(0.9000);">OK</span>
<span id="t34" class="tx" style="left:1806.79px;top:402.54px;font-size:12px;font-weight:normal;color:#000;transform:scaleX(0.9111);">Cancel</span>
<span id="t35" class="tx" style="left:1874.10px;top:402.54px;font-size:12px;font-weight:normal;color:#000;transform:scaleX(0.8467);">Apply</span>
<span id="t36" class="tx" style="left:56.60px;top:1006.74px;font-size:12px;font-weight:normal;color:#000;transform:scaleX(0.8982);">1-CMT215</span>
<span id="t37" class="tx" style="left:200.80px;top:1006.74px;font-size:12px;font-weight:normal;color:#000;transform:scaleX(0.9019);">1-CMT215 C TAYX2</span>
<span id="t38" class="tx" style="left:449.73px;top:1008.34px;font-size:12px;font-weight:normal;color:#000;transform:scaleX(0.9667);">L</span>
<span id="t39" class="tx" style="left:485.22px;top:1006.24px;font-size:12px;font-weight:normal;color:#000;transform:scaleX(0.8826);">Sew</span>
<span id="t40" class="tx" style="left:529.05px;top:1006.24px;font-size:12px;font-weight:normal;color:#000;transform:scaleX(0.9542);">MET</span>
<span id="t41" class="tx" style="left:570.28px;top:1006.24px;font-size:12px;font-weight:normal;color:#000;transform:scaleX(0.9186);">Snap to:</span>
<span id="t42" class="tx" style="left:625.70px;top:1006.24px;font-size:12px;font-weight:normal;color:#000;transform:scaleX(0.9000);">Grid</span>
<span id="t43" class="tx" style="left:656.50px;top:1006.24px;font-size:12px;font-weight:normal;color:#000;transform:scaleX(0.8968);">Geom</span>
<span id="t44" class="tx" style="left:696.58px;top:1006.24px;font-size:12px;font-weight:normal;color:#000;transform:scaleX(0.9174);">Prec</span>
<span id="t45" class="tx" style="left:737.05px;top:1006.24px;font-size:12px;font-weight:normal;color:#9a9a9a;transform:scaleX(0.9500);">1.00</span>
<span id="t46" class="tx" style="left:780.31px;top:1006.24px;font-size:12px;font-weight:normal;color:#000;transform:scaleX(0.8899);">Show Smoothing</span>
<span id="t47" class="tx" style="left:874.53px;top:1006.24px;font-size:12px;font-weight:normal;color:#000;transform:scaleX(0.8688);">Hide Seams</span>
<span id="t48" class="tx" style="left:941.31px;top:1006.24px;font-size:12px;font-weight:normal;color:#000;transform:scaleX(0.8907);">Show Grid</span>
<span id="t49" class="tx" style="left:4.60px;top:1031.34px;font-size:12px;font-weight:normal;color:#111;transform:scaleX(0.8971);">Ready</span>
<span id="t50" class="tx" style="left:1835.24px;top:1032.19px;font-size:11px;font-weight:normal;color:#888;transform:scaleX(0.9619);">CAP</span>
<span id="t51" class="tx" style="left:1860.90px;top:1032.19px;font-size:11px;font-weight:normal;color:#111;transform:scaleX(1.1043);">NUM</span>
<span id="t52" class="tx" style="left:1893.14px;top:1032.19px;font-size:11px;font-weight:normal;color:#888;transform:scaleX(0.8643);">SCRL</span>
<span id="t53" class="tx" style="left:1767.58px;top:1059.64px;font-size:12px;font-weight:normal;color:#fff;transform:scaleX(0.9208);">ENG</span>
<span id="t54" class="tx" style="left:1818.70px;top:1050.14px;font-size:12px;font-weight:normal;color:#fff;transform:scaleX(0.9167);">09:39</span>
<span id="t55" class="tx" style="left:1803.93px;top:1068.64px;font-size:12px;font-weight:normal;color:#fff;transform:scaleX(0.9678);">12/08/2025</span>
</body></html>
